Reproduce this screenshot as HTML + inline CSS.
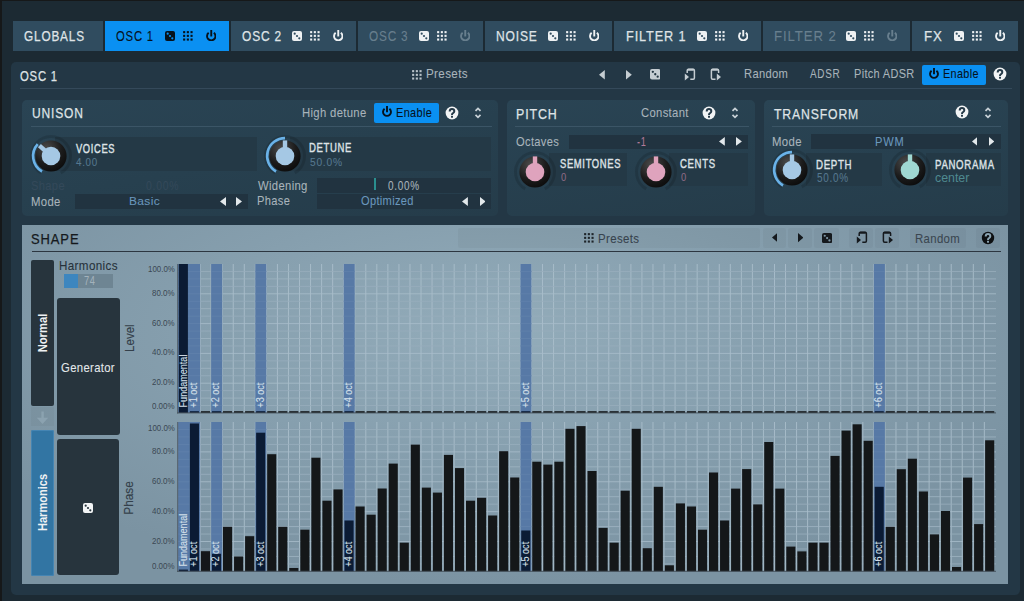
<!DOCTYPE html><html><head><meta charset="utf-8"><style>
html,body{margin:0;padding:0;}
body{width:1024px;height:601px;overflow:hidden;position:relative;background:#1c2a33;font-family:"Liberation Sans",sans-serif;}
.t{position:absolute;white-space:nowrap;transform-origin:0 0;}
.r{position:absolute;}
</style></head><body>
<div class="r" style="left:0px;top:0px;width:1024px;height:1px;background:#161819;border-radius:0px;"></div>
<div class="r" style="left:0px;top:0px;width:2px;height:601px;background:#161819;border-radius:0px;"></div>
<div class="r" style="left:13px;top:21px;width:90px;height:30px;background:#304c5f;border-radius:0px;"></div>
<div class="t" style="left:24.01px;top:29.35px;font-size:14.35px;line-height:14.35px;letter-spacing:1.00px;-webkit-text-stroke:0.25px #dfe3e6;color:#dfe3e6;transform:scaleX(0.823);">GLOBALS</div>
<div class="r" style="left:105px;top:21px;width:124px;height:30px;background:#0a90f2;border-radius:0px;"></div>
<div class="t" style="left:116.43px;top:29.35px;font-size:14.35px;line-height:14.35px;letter-spacing:1.00px;-webkit-text-stroke:0.08px #06121c;color:#06121c;transform:scaleX(0.789);">OSC 1</div>
<svg class="r" style="left:165px;top:31px;" width="10" height="10" viewBox="0 0 10 10"><rect x="0" y="0" width="10" height="10" rx="2" fill="#06121c"/><circle cx="2.7" cy="2.7" r="1.1" fill="#0a90f2"/><circle cx="5.0" cy="5.0" r="1.1" fill="#0a90f2"/><circle cx="7.3" cy="7.3" r="1.1" fill="#0a90f2"/></svg>
<svg class="r" style="left:182.5px;top:31px;" width="10" height="10" viewBox="0 0 10 10"><rect x="0.1" y="0.1" width="2.1" height="2.1" fill="#06121c"/><rect x="0.1" y="3.8000000000000003" width="2.1" height="2.1" fill="#06121c"/><rect x="0.1" y="7.5" width="2.1" height="2.1" fill="#06121c"/><rect x="3.8000000000000003" y="0.1" width="2.1" height="2.1" fill="#06121c"/><rect x="3.8000000000000003" y="3.8000000000000003" width="2.1" height="2.1" fill="#06121c"/><rect x="3.8000000000000003" y="7.5" width="2.1" height="2.1" fill="#06121c"/><rect x="7.5" y="0.1" width="2.1" height="2.1" fill="#06121c"/><rect x="7.5" y="3.8000000000000003" width="2.1" height="2.1" fill="#06121c"/><rect x="7.5" y="7.5" width="2.1" height="2.1" fill="#06121c"/></svg>
<svg class="r" style="left:205.5px;top:29.5px;" width="10.5" height="11.5" viewBox="0 0 10.5 11.5"><g transform="translate(0,0.5)"><path d="M2.66 2.34 A4.20 4.20 0 1 0 7.84 2.34" fill="none" stroke="#06121c" stroke-width="1.9"/><line x1="5.25" y1="-0.5" x2="5.25" y2="5.95" stroke="#06121c" stroke-width="1.9"/></g></svg>
<div class="r" style="left:231px;top:21px;width:125px;height:30px;background:#304c5f;border-radius:0px;"></div>
<div class="t" style="left:242.10px;top:29.35px;font-size:14.35px;line-height:14.35px;letter-spacing:1.00px;-webkit-text-stroke:0.25px #dfe3e6;color:#dfe3e6;transform:scaleX(0.833);">OSC 2</div>
<svg class="r" style="left:292px;top:31px;" width="10" height="10" viewBox="0 0 10 10"><rect x="0" y="0" width="10" height="10" rx="2" fill="#eef1f3"/><circle cx="2.7" cy="2.7" r="1.1" fill="#304c5f"/><circle cx="5.0" cy="5.0" r="1.1" fill="#304c5f"/><circle cx="7.3" cy="7.3" r="1.1" fill="#304c5f"/></svg>
<svg class="r" style="left:309.5px;top:31px;" width="10" height="10" viewBox="0 0 10 10"><rect x="0.1" y="0.1" width="2.1" height="2.1" fill="#eef1f3"/><rect x="0.1" y="3.8000000000000003" width="2.1" height="2.1" fill="#eef1f3"/><rect x="0.1" y="7.5" width="2.1" height="2.1" fill="#eef1f3"/><rect x="3.8000000000000003" y="0.1" width="2.1" height="2.1" fill="#eef1f3"/><rect x="3.8000000000000003" y="3.8000000000000003" width="2.1" height="2.1" fill="#eef1f3"/><rect x="3.8000000000000003" y="7.5" width="2.1" height="2.1" fill="#eef1f3"/><rect x="7.5" y="0.1" width="2.1" height="2.1" fill="#eef1f3"/><rect x="7.5" y="3.8000000000000003" width="2.1" height="2.1" fill="#eef1f3"/><rect x="7.5" y="7.5" width="2.1" height="2.1" fill="#eef1f3"/></svg>
<svg class="r" style="left:332.5px;top:29.5px;" width="10.5" height="11.5" viewBox="0 0 10.5 11.5"><g transform="translate(0,0.5)"><path d="M2.66 2.34 A4.20 4.20 0 1 0 7.84 2.34" fill="none" stroke="#eef1f3" stroke-width="1.9"/><line x1="5.25" y1="-0.5" x2="5.25" y2="5.95" stroke="#eef1f3" stroke-width="1.9"/></g></svg>
<div class="r" style="left:358px;top:21px;width:125px;height:30px;background:#304c5f;border-radius:0px;"></div>
<div class="t" style="left:369.21px;top:29.35px;font-size:14.35px;line-height:14.35px;letter-spacing:1.00px;-webkit-text-stroke:0.08px #687f8e;color:#687f8e;transform:scaleX(0.822);">OSC 3</div>
<svg class="r" style="left:419px;top:31px;" width="10" height="10" viewBox="0 0 10 10"><rect x="0" y="0" width="10" height="10" rx="2" fill="#eef1f3"/><circle cx="2.7" cy="2.7" r="1.1" fill="#304c5f"/><circle cx="5.0" cy="5.0" r="1.1" fill="#304c5f"/><circle cx="7.3" cy="7.3" r="1.1" fill="#304c5f"/></svg>
<svg class="r" style="left:436.5px;top:31px;" width="10" height="10" viewBox="0 0 10 10"><rect x="0.1" y="0.1" width="2.1" height="2.1" fill="#eef1f3"/><rect x="0.1" y="3.8000000000000003" width="2.1" height="2.1" fill="#eef1f3"/><rect x="0.1" y="7.5" width="2.1" height="2.1" fill="#eef1f3"/><rect x="3.8000000000000003" y="0.1" width="2.1" height="2.1" fill="#eef1f3"/><rect x="3.8000000000000003" y="3.8000000000000003" width="2.1" height="2.1" fill="#eef1f3"/><rect x="3.8000000000000003" y="7.5" width="2.1" height="2.1" fill="#eef1f3"/><rect x="7.5" y="0.1" width="2.1" height="2.1" fill="#eef1f3"/><rect x="7.5" y="3.8000000000000003" width="2.1" height="2.1" fill="#eef1f3"/><rect x="7.5" y="7.5" width="2.1" height="2.1" fill="#eef1f3"/></svg>
<svg class="r" style="left:459.5px;top:29.5px;" width="10.5" height="11.5" viewBox="0 0 10.5 11.5"><g transform="translate(0,0.5)"><path d="M2.66 2.34 A4.20 4.20 0 1 0 7.84 2.34" fill="none" stroke="#687f8e" stroke-width="1.9"/><line x1="5.25" y1="-0.5" x2="5.25" y2="5.95" stroke="#687f8e" stroke-width="1.9"/></g></svg>
<div class="r" style="left:485px;top:21px;width:127px;height:30px;background:#304c5f;border-radius:0px;"></div>
<div class="t" style="left:496.24px;top:29.35px;font-size:14.35px;line-height:14.35px;letter-spacing:1.00px;-webkit-text-stroke:0.25px #dfe3e6;color:#dfe3e6;transform:scaleX(0.840);">NOISE</div>
<svg class="r" style="left:548px;top:31px;" width="10" height="10" viewBox="0 0 10 10"><rect x="0" y="0" width="10" height="10" rx="2" fill="#eef1f3"/><circle cx="2.7" cy="2.7" r="1.1" fill="#304c5f"/><circle cx="5.0" cy="5.0" r="1.1" fill="#304c5f"/><circle cx="7.3" cy="7.3" r="1.1" fill="#304c5f"/></svg>
<svg class="r" style="left:565.5px;top:31px;" width="10" height="10" viewBox="0 0 10 10"><rect x="0.1" y="0.1" width="2.1" height="2.1" fill="#eef1f3"/><rect x="0.1" y="3.8000000000000003" width="2.1" height="2.1" fill="#eef1f3"/><rect x="0.1" y="7.5" width="2.1" height="2.1" fill="#eef1f3"/><rect x="3.8000000000000003" y="0.1" width="2.1" height="2.1" fill="#eef1f3"/><rect x="3.8000000000000003" y="3.8000000000000003" width="2.1" height="2.1" fill="#eef1f3"/><rect x="3.8000000000000003" y="7.5" width="2.1" height="2.1" fill="#eef1f3"/><rect x="7.5" y="0.1" width="2.1" height="2.1" fill="#eef1f3"/><rect x="7.5" y="3.8000000000000003" width="2.1" height="2.1" fill="#eef1f3"/><rect x="7.5" y="7.5" width="2.1" height="2.1" fill="#eef1f3"/></svg>
<svg class="r" style="left:588.5px;top:29.5px;" width="10.5" height="11.5" viewBox="0 0 10.5 11.5"><g transform="translate(0,0.5)"><path d="M2.66 2.34 A4.20 4.20 0 1 0 7.84 2.34" fill="none" stroke="#eef1f3" stroke-width="1.9"/><line x1="5.25" y1="-0.5" x2="5.25" y2="5.95" stroke="#eef1f3" stroke-width="1.9"/></g></svg>
<div class="r" style="left:614px;top:21px;width:147px;height:30px;background:#304c5f;border-radius:0px;"></div>
<div class="t" style="left:626.08px;top:29.35px;font-size:14.35px;line-height:14.35px;letter-spacing:1.00px;-webkit-text-stroke:0.25px #dfe3e6;color:#dfe3e6;transform:scaleX(0.885);">FILTER 1</div>
<svg class="r" style="left:697px;top:31px;" width="10" height="10" viewBox="0 0 10 10"><rect x="0" y="0" width="10" height="10" rx="2" fill="#eef1f3"/><circle cx="2.7" cy="2.7" r="1.1" fill="#304c5f"/><circle cx="5.0" cy="5.0" r="1.1" fill="#304c5f"/><circle cx="7.3" cy="7.3" r="1.1" fill="#304c5f"/></svg>
<svg class="r" style="left:714.5px;top:31px;" width="10" height="10" viewBox="0 0 10 10"><rect x="0.1" y="0.1" width="2.1" height="2.1" fill="#eef1f3"/><rect x="0.1" y="3.8000000000000003" width="2.1" height="2.1" fill="#eef1f3"/><rect x="0.1" y="7.5" width="2.1" height="2.1" fill="#eef1f3"/><rect x="3.8000000000000003" y="0.1" width="2.1" height="2.1" fill="#eef1f3"/><rect x="3.8000000000000003" y="3.8000000000000003" width="2.1" height="2.1" fill="#eef1f3"/><rect x="3.8000000000000003" y="7.5" width="2.1" height="2.1" fill="#eef1f3"/><rect x="7.5" y="0.1" width="2.1" height="2.1" fill="#eef1f3"/><rect x="7.5" y="3.8000000000000003" width="2.1" height="2.1" fill="#eef1f3"/><rect x="7.5" y="7.5" width="2.1" height="2.1" fill="#eef1f3"/></svg>
<svg class="r" style="left:737.5px;top:29.5px;" width="10.5" height="11.5" viewBox="0 0 10.5 11.5"><g transform="translate(0,0.5)"><path d="M2.66 2.34 A4.20 4.20 0 1 0 7.84 2.34" fill="none" stroke="#eef1f3" stroke-width="1.9"/><line x1="5.25" y1="-0.5" x2="5.25" y2="5.95" stroke="#eef1f3" stroke-width="1.9"/></g></svg>
<div class="r" style="left:763px;top:21px;width:147px;height:30px;background:#304c5f;border-radius:0px;"></div>
<div class="t" style="left:774.35px;top:29.35px;font-size:14.35px;line-height:14.35px;letter-spacing:1.00px;-webkit-text-stroke:0.08px #687f8e;color:#687f8e;transform:scaleX(0.918);">FILTER 2</div>
<svg class="r" style="left:846px;top:31px;" width="10" height="10" viewBox="0 0 10 10"><rect x="0" y="0" width="10" height="10" rx="2" fill="#eef1f3"/><circle cx="2.7" cy="2.7" r="1.1" fill="#304c5f"/><circle cx="5.0" cy="5.0" r="1.1" fill="#304c5f"/><circle cx="7.3" cy="7.3" r="1.1" fill="#304c5f"/></svg>
<svg class="r" style="left:863.5px;top:31px;" width="10" height="10" viewBox="0 0 10 10"><rect x="0.1" y="0.1" width="2.1" height="2.1" fill="#eef1f3"/><rect x="0.1" y="3.8000000000000003" width="2.1" height="2.1" fill="#eef1f3"/><rect x="0.1" y="7.5" width="2.1" height="2.1" fill="#eef1f3"/><rect x="3.8000000000000003" y="0.1" width="2.1" height="2.1" fill="#eef1f3"/><rect x="3.8000000000000003" y="3.8000000000000003" width="2.1" height="2.1" fill="#eef1f3"/><rect x="3.8000000000000003" y="7.5" width="2.1" height="2.1" fill="#eef1f3"/><rect x="7.5" y="0.1" width="2.1" height="2.1" fill="#eef1f3"/><rect x="7.5" y="3.8000000000000003" width="2.1" height="2.1" fill="#eef1f3"/><rect x="7.5" y="7.5" width="2.1" height="2.1" fill="#eef1f3"/></svg>
<svg class="r" style="left:886.5px;top:29.5px;" width="10.5" height="11.5" viewBox="0 0 10.5 11.5"><g transform="translate(0,0.5)"><path d="M2.66 2.34 A4.20 4.20 0 1 0 7.84 2.34" fill="none" stroke="#687f8e" stroke-width="1.9"/><line x1="5.25" y1="-0.5" x2="5.25" y2="5.95" stroke="#687f8e" stroke-width="1.9"/></g></svg>
<div class="r" style="left:912px;top:21px;width:106px;height:30px;background:#304c5f;border-radius:0px;"></div>
<div class="t" style="left:923.94px;top:29.35px;font-size:14.35px;line-height:14.35px;letter-spacing:1.00px;-webkit-text-stroke:0.25px #dfe3e6;color:#dfe3e6;transform:scaleX(0.922);">FX</div>
<svg class="r" style="left:954px;top:31px;" width="10" height="10" viewBox="0 0 10 10"><rect x="0" y="0" width="10" height="10" rx="2" fill="#eef1f3"/><circle cx="2.7" cy="2.7" r="1.1" fill="#304c5f"/><circle cx="5.0" cy="5.0" r="1.1" fill="#304c5f"/><circle cx="7.3" cy="7.3" r="1.1" fill="#304c5f"/></svg>
<svg class="r" style="left:971.5px;top:31px;" width="10" height="10" viewBox="0 0 10 10"><rect x="0.1" y="0.1" width="2.1" height="2.1" fill="#eef1f3"/><rect x="0.1" y="3.8000000000000003" width="2.1" height="2.1" fill="#eef1f3"/><rect x="0.1" y="7.5" width="2.1" height="2.1" fill="#eef1f3"/><rect x="3.8000000000000003" y="0.1" width="2.1" height="2.1" fill="#eef1f3"/><rect x="3.8000000000000003" y="3.8000000000000003" width="2.1" height="2.1" fill="#eef1f3"/><rect x="3.8000000000000003" y="7.5" width="2.1" height="2.1" fill="#eef1f3"/><rect x="7.5" y="0.1" width="2.1" height="2.1" fill="#eef1f3"/><rect x="7.5" y="3.8000000000000003" width="2.1" height="2.1" fill="#eef1f3"/><rect x="7.5" y="7.5" width="2.1" height="2.1" fill="#eef1f3"/></svg>
<svg class="r" style="left:994.5px;top:29.5px;" width="10.5" height="11.5" viewBox="0 0 10.5 11.5"><g transform="translate(0,0.5)"><path d="M2.66 2.34 A4.20 4.20 0 1 0 7.84 2.34" fill="none" stroke="#eef1f3" stroke-width="1.9"/><line x1="5.25" y1="-0.5" x2="5.25" y2="5.95" stroke="#eef1f3" stroke-width="1.9"/></g></svg>
<div class="r" style="left:11px;top:62px;width:1009px;height:533px;background:#233745;border-radius:5px;"></div>
<div class="t" style="left:20.43px;top:68.13px;font-size:15.07px;line-height:15.07px;letter-spacing:1.06px;-webkit-text-stroke:0.25px #dfe3e6;color:#dfe3e6;transform:scaleX(0.751);">OSC 1</div>
<div class="r" style="left:20px;top:88px;width:992px;height:1px;background:#34495a;border-radius:0px;"></div>
<svg class="r" style="left:412px;top:69.8px;" width="10" height="10" viewBox="0 0 10 10"><rect x="0.1" y="0.1" width="2.1" height="2.1" fill="#b8c2c8"/><rect x="0.1" y="3.8000000000000003" width="2.1" height="2.1" fill="#b8c2c8"/><rect x="0.1" y="7.5" width="2.1" height="2.1" fill="#b8c2c8"/><rect x="3.8000000000000003" y="0.1" width="2.1" height="2.1" fill="#b8c2c8"/><rect x="3.8000000000000003" y="3.8000000000000003" width="2.1" height="2.1" fill="#b8c2c8"/><rect x="3.8000000000000003" y="7.5" width="2.1" height="2.1" fill="#b8c2c8"/><rect x="7.5" y="0.1" width="2.1" height="2.1" fill="#b8c2c8"/><rect x="7.5" y="3.8000000000000003" width="2.1" height="2.1" fill="#b8c2c8"/><rect x="7.5" y="7.5" width="2.1" height="2.1" fill="#b8c2c8"/></svg>
<div class="t" style="left:426.07px;top:68.34px;font-size:12.46px;line-height:12.46px;letter-spacing:0.37px;-webkit-text-stroke:0.08px #a9b4bb;color:#a9b4bb;transform:scaleX(0.935);">Presets</div>
<svg class="r" style="left:599.4000000000001px;top:70.0px;" width="5.7999999999999545" height="9.5" viewBox="0 0 5.7999999999999545 9.5"><path d="M5.7999999999999545 0 L0 4.75 L5.7999999999999545 9.5 Z" fill="#c5cdd2"/></svg>
<svg class="r" style="left:625.9px;top:70.0px;" width="5.7999999999999545" height="9.5" viewBox="0 0 5.7999999999999545 9.5"><path d="M0 0 L5.7999999999999545 4.75 L0 9.5 Z" fill="#c5cdd2"/></svg>
<svg class="r" style="left:649.5px;top:69.2px;" width="10.5" height="10.5" viewBox="0 0 10.5 10.5"><rect x="0" y="0" width="10.5" height="10.5" rx="2" fill="#c5cdd2"/><circle cx="2.835" cy="2.835" r="1.155" fill="#223541"/><circle cx="5.25" cy="5.25" r="1.155" fill="#223541"/><circle cx="7.665" cy="7.665" r="1.155" fill="#223541"/></svg>
<svg class="r" style="left:684px;top:68px;" width="12" height="13" viewBox="0 0 12 13"><path d="M3.2 5 V2.6 Q3.2 1.3 4.5 1.3 H9.2 Q10.4 1.3 10.4 2.6 V10.1 Q10.4 11.3 9.2 11.3 H6.3" fill="none" stroke="#c5cdd2" stroke-width="1.5"/><rect x="3.6" y="0.8" width="6.4" height="2" rx="0.8" fill="#c5cdd2"/><path d="M0.8 5.6 L5 9 L0.8 12.4 Z" fill="#c5cdd2"/></svg>
<svg class="r" style="left:710px;top:68px;" width="12" height="13" viewBox="0 0 12 13"><path d="M8.6 5 V2.6 Q8.6 1.3 7.3 1.3 H2.6 Q1.4 1.3 1.4 2.6 V10.1 Q1.4 11.3 2.6 11.3 H5.5" fill="none" stroke="#c5cdd2" stroke-width="1.5"/><rect x="1.8" y="0.8" width="6.4" height="2" rx="0.8" fill="#c5cdd2"/><path d="M6.8 5.6 L11 9 L6.8 12.4 Z" fill="#c5cdd2"/></svg>
<div class="t" style="left:743.71px;top:68.34px;font-size:12.46px;line-height:12.46px;letter-spacing:0.37px;-webkit-text-stroke:0.08px #a9b4bb;color:#a9b4bb;transform:scaleX(0.898);">Random</div>
<div class="t" style="left:810.20px;top:68.34px;font-size:12.46px;line-height:12.46px;letter-spacing:0.87px;-webkit-text-stroke:0.08px #a9b4bb;color:#a9b4bb;transform:scaleX(0.800);">ADSR</div>
<div class="t" style="left:853.62px;top:68.34px;font-size:12.46px;line-height:12.46px;letter-spacing:0.37px;-webkit-text-stroke:0.08px #a9b4bb;color:#a9b4bb;transform:scaleX(0.880);">Pitch ADSR</div>
<div class="r" style="left:921.5px;top:64.6px;width:64.20000000000005px;height:20.0px;background:#0a90f2;border-radius:2px;"></div>
<svg class="r" style="left:929px;top:68.0px;" width="10" height="11" viewBox="0 0 10 11"><g transform="translate(0,0.5)"><path d="M2.57 2.29 A3.95 3.95 0 1 0 7.43 2.29" fill="none" stroke="#06121c" stroke-width="1.9"/><line x1="5.0" y1="-0.5" x2="5.0" y2="5.7" stroke="#06121c" stroke-width="1.9"/></g></svg>
<div class="t" style="left:943.33px;top:68.34px;font-size:12.46px;line-height:12.46px;letter-spacing:0.37px;-webkit-text-stroke:0.08px #06121c;color:#06121c;transform:scaleX(0.874);">Enable</div>
<svg class="r" style="left:992.5px;top:67.3px;" width="14" height="14" viewBox="0 0 14 14"><circle cx="7" cy="7" r="6.4" fill="#f2f4f5"/><path d="M4.7 5.5 Q4.7 3.1 7 3.1 Q9.3 3.1 9.3 5.2 Q9.3 6.4 8 7.1 Q7 7.6 7 8.9" fill="none" stroke="#253a48" stroke-width="2"/><rect x="6" y="9.8" width="2" height="1.9" fill="#253a48"/></svg>
<div class="r" style="left:22px;top:100px;width:476px;height:116px;background:linear-gradient(170deg,#2a4454 0%,#27404f 50%,#253c4a 100%);border-radius:5px;"></div>
<div class="r" style="left:507px;top:100px;width:248px;height:116px;background:linear-gradient(170deg,#2a4454 0%,#27404f 50%,#253c4a 100%);border-radius:5px;"></div>
<div class="r" style="left:764px;top:100px;width:244px;height:116px;background:linear-gradient(170deg,#2a4454 0%,#27404f 50%,#253c4a 100%);border-radius:5px;"></div>
<div class="t" style="left:31.84px;top:106.48px;font-size:14.78px;line-height:14.78px;letter-spacing:1.03px;-webkit-text-stroke:0.25px #dfe3e6;color:#dfe3e6;transform:scaleX(0.814);">UNISON</div>
<div class="t" style="left:302.40px;top:106.84px;font-size:12.46px;line-height:12.46px;letter-spacing:0.37px;-webkit-text-stroke:0.08px #a9b4bb;color:#a9b4bb;transform:scaleX(0.907);">High detune</div>
<div class="r" style="left:374px;top:103px;width:65px;height:20px;background:#0a90f2;border-radius:2px;"></div>
<svg class="r" style="left:382.3px;top:106.3px;" width="10" height="11" viewBox="0 0 10 11"><g transform="translate(0,0.5)"><path d="M2.57 2.29 A3.95 3.95 0 1 0 7.43 2.29" fill="none" stroke="#06121c" stroke-width="1.9"/><line x1="5.0" y1="-0.5" x2="5.0" y2="5.7" stroke="#06121c" stroke-width="1.9"/></g></svg>
<div class="t" style="left:396.12px;top:106.84px;font-size:12.46px;line-height:12.46px;letter-spacing:0.37px;-webkit-text-stroke:0.08px #06121c;color:#06121c;transform:scaleX(0.882);">Enable</div>
<svg class="r" style="left:445px;top:105.8px;" width="14" height="14" viewBox="0 0 14 14"><circle cx="7" cy="7" r="6.4" fill="#f2f4f5"/><path d="M4.7 5.5 Q4.7 3.1 7 3.1 Q9.3 3.1 9.3 5.2 Q9.3 6.4 8 7.1 Q7 7.6 7 8.9" fill="none" stroke="#253a48" stroke-width="2"/><rect x="6" y="9.8" width="2" height="1.9" fill="#253a48"/></svg>
<svg class="r" style="left:474.3px;top:106.6px;" width="8" height="12" viewBox="0 0 8 12"><path d="M1.5 3.9 L4 1.4 L6.5 3.9" fill="none" stroke="#c9d2d8" stroke-width="1.7"/><path d="M1.5 7.9 L4 10.4 L6.5 7.9" fill="none" stroke="#c9d2d8" stroke-width="1.7"/></svg>
<div class="r" style="left:31px;top:126px;width:461px;height:1px;background:#3b5566;border-radius:0px;"></div>
<div class="r" style="left:55px;top:137px;width:202px;height:34px;background:#243946;border-radius:0px;"></div>
<div class="r" style="left:290px;top:137px;width:201px;height:34px;background:#243946;border-radius:0px;"></div>
<svg class="r" style="left:26.5px;top:131.8px;" width="48" height="48" viewBox="0 0 48 48"><path d="M14.25 40.89 A19.5 19.5 0 1 1 33.75 40.89" fill="none" stroke="rgba(0,0,0,0.13)" stroke-width="3"/><path d="M15.05 39.50 A17.9 17.9 0 0 1 10.70 12.02" fill="none" stroke="#6ab2e8" stroke-width="2.6"/><defs><radialGradient id="g50155" cx="35%" cy="25%" r="80%"><stop offset="0" stop-color="#4a4a4a"/><stop offset="0.6" stop-color="#1c1c1c"/><stop offset="1" stop-color="#0c0c0c"/></radialGradient></defs><circle cx="24.0" cy="24.0" r="15.6" fill="url(#g50155)"/><line x1="24.0" y1="24.0" x2="12.41" y2="13.56" stroke="#a5c8e4" stroke-width="4.4"/><circle cx="24.0" cy="24.0" r="9.3" fill="#a5c8e4"/></svg>
<div class="t" style="left:75.91px;top:142.59px;font-size:12.17px;line-height:12.17px;letter-spacing:0.85px;-webkit-text-stroke:0.4px #dfe3e6;color:#dfe3e6;transform:scaleX(0.767);">VOICES</div>
<div class="t" style="left:75.80px;top:157.42px;font-size:10.72px;line-height:10.72px;letter-spacing:0.75px;-webkit-text-stroke:0.08px #56788f;color:#56788f;transform:scaleX(0.915);">4.00</div>
<div class="t" style="left:31.44px;top:179.94px;font-size:12.46px;line-height:12.46px;letter-spacing:0.37px;-webkit-text-stroke:0.08px #34495a;color:#34495a;transform:scaleX(0.896);">Shape</div>
<div class="t" style="left:145.58px;top:179.94px;font-size:12.46px;line-height:12.46px;letter-spacing:0.87px;-webkit-text-stroke:0.08px #34495a;color:#34495a;transform:scaleX(0.837);">0.00%</div>
<div class="t" style="left:31.09px;top:195.54px;font-size:12.46px;line-height:12.46px;letter-spacing:0.37px;-webkit-text-stroke:0.08px #a9b4bb;color:#a9b4bb;transform:scaleX(0.910);">Mode</div>
<div class="r" style="left:75px;top:194px;width:173px;height:15px;background:#213340;border-radius:0px;"></div>
<div class="t" style="left:129.04px;top:196.08px;font-size:11.59px;line-height:11.59px;letter-spacing:0.35px;-webkit-text-stroke:0.08px #6a97bd;color:#6a97bd;transform:scaleX(1.031);">Basic</div>
<svg class="r" style="left:219.7px;top:197.0px;" width="6.100000000000023" height="9.0" viewBox="0 0 6.100000000000023 9.0"><path d="M6.100000000000023 0 L0 4.5 L6.100000000000023 9.0 Z" fill="#e3e8eb"/></svg>
<svg class="r" style="left:236.3px;top:197.0px;" width="6.0" height="9.0" viewBox="0 0 6.0 9.0"><path d="M0 0 L6.0 4.5 L0 9.0 Z" fill="#e3e8eb"/></svg>
<svg class="r" style="left:261.0px;top:132.0px;" width="48" height="48" viewBox="0 0 48 48"><path d="M14.25 40.89 A19.5 19.5 0 1 1 33.75 40.89" fill="none" stroke="rgba(0,0,0,0.13)" stroke-width="3"/><path d="M15.05 39.50 A17.9 17.9 0 0 1 24.00 6.10" fill="none" stroke="#6ab2e8" stroke-width="2.6"/><defs><radialGradient id="g285156" cx="35%" cy="25%" r="80%"><stop offset="0" stop-color="#4a4a4a"/><stop offset="0.6" stop-color="#1c1c1c"/><stop offset="1" stop-color="#0c0c0c"/></radialGradient></defs><circle cx="24.0" cy="24.0" r="15.6" fill="url(#g285156)"/><line x1="24.0" y1="24.0" x2="24.00" y2="8.40" stroke="#a5c8e4" stroke-width="4.4"/><circle cx="24.0" cy="24.0" r="9.3" fill="#a5c8e4"/></svg>
<div class="t" style="left:309.24px;top:142.32px;font-size:12.61px;line-height:12.61px;letter-spacing:0.88px;-webkit-text-stroke:0.4px #dfe3e6;color:#dfe3e6;transform:scaleX(0.755);">DETUNE</div>
<div class="t" style="left:309.59px;top:156.68px;font-size:11.59px;line-height:11.59px;letter-spacing:0.81px;-webkit-text-stroke:0.08px #56788f;color:#56788f;transform:scaleX(0.888);">50.0%</div>
<div class="t" style="left:258.00px;top:179.45px;font-size:13.04px;line-height:13.04px;letter-spacing:0.39px;-webkit-text-stroke:0.08px #a9b4bb;color:#a9b4bb;transform:scaleX(0.865);">Widening</div>
<div class="r" style="left:317px;top:178px;width:174px;height:15px;background:#213340;border-radius:0px;"></div>
<div class="r" style="left:374px;top:178px;width:2px;height:12px;background:#2a8f8f;border-radius:0px;"></div>
<div class="t" style="left:388.30px;top:179.45px;font-size:13.04px;line-height:13.04px;letter-spacing:0.91px;-webkit-text-stroke:0.08px #a9b4bb;color:#a9b4bb;transform:scaleX(0.764);">0.00%</div>
<div class="t" style="left:257.11px;top:195.47px;font-size:12.32px;line-height:12.32px;letter-spacing:0.37px;-webkit-text-stroke:0.08px #a9b4bb;color:#a9b4bb;transform:scaleX(0.904);">Phase</div>
<div class="r" style="left:317px;top:194px;width:174px;height:15px;background:#213340;border-radius:0px;"></div>
<div class="t" style="left:361.25px;top:195.47px;font-size:12.32px;line-height:12.32px;letter-spacing:0.37px;-webkit-text-stroke:0.08px #6a97bd;color:#6a97bd;transform:scaleX(0.898);">Optimized</div>
<svg class="r" style="left:462.09999999999997px;top:197.0px;" width="5.900000000000034" height="9.0" viewBox="0 0 5.900000000000034 9.0"><path d="M5.900000000000034 0 L0 4.5 L5.900000000000034 9.0 Z" fill="#e3e8eb"/></svg>
<svg class="r" style="left:479.5px;top:197.0px;" width="5.699999999999989" height="9.0" viewBox="0 0 5.699999999999989 9.0"><path d="M0 0 L5.699999999999989 4.5 L0 9.0 Z" fill="#e3e8eb"/></svg>
<div class="t" style="left:516.31px;top:106.43px;font-size:15.07px;line-height:15.07px;letter-spacing:1.06px;-webkit-text-stroke:0.25px #dfe3e6;color:#dfe3e6;transform:scaleX(0.825);">PITCH</div>
<div class="t" style="left:641.14px;top:106.70px;font-size:12.75px;line-height:12.75px;letter-spacing:0.38px;-webkit-text-stroke:0.08px #a9b4bb;color:#a9b4bb;transform:scaleX(0.882);">Constant</div>
<svg class="r" style="left:702px;top:105.6px;" width="14" height="14" viewBox="0 0 14 14"><circle cx="7" cy="7" r="6.4" fill="#f2f4f5"/><path d="M4.7 5.5 Q4.7 3.1 7 3.1 Q9.3 3.1 9.3 5.2 Q9.3 6.4 8 7.1 Q7 7.6 7 8.9" fill="none" stroke="#253a48" stroke-width="2"/><rect x="6" y="9.8" width="2" height="1.9" fill="#253a48"/></svg>
<svg class="r" style="left:731.1px;top:106.6px;" width="8" height="12" viewBox="0 0 8 12"><path d="M1.5 3.9 L4 1.4 L6.5 3.9" fill="none" stroke="#c9d2d8" stroke-width="1.7"/><path d="M1.5 7.9 L4 10.4 L6.5 7.9" fill="none" stroke="#c9d2d8" stroke-width="1.7"/></svg>
<div class="r" style="left:515px;top:126px;width:234px;height:1px;background:#3b5566;border-radius:0px;"></div>
<div class="t" style="left:515.94px;top:135.50px;font-size:12.75px;line-height:12.75px;letter-spacing:0.38px;-webkit-text-stroke:0.08px #a9b4bb;color:#a9b4bb;transform:scaleX(0.874);">Octaves</div>
<div class="r" style="left:568.5px;top:134.5px;width:179.10000000000002px;height:14.0px;background:#213340;border-radius:0px;"></div>
<div class="t" style="left:637.13px;top:135.50px;font-size:12.75px;line-height:12.75px;letter-spacing:0.89px;-webkit-text-stroke:0.08px #b07a98;color:#b07a98;transform:scaleX(0.721);">-1</div>
<svg class="r" style="left:719.2px;top:137.20000000000002px;" width="5.7999999999999545" height="8.799999999999983" viewBox="0 0 5.7999999999999545 8.799999999999983"><path d="M5.7999999999999545 0 L0 4.3999999999999915 L5.7999999999999545 8.799999999999983 Z" fill="#e3e8eb"/></svg>
<svg class="r" style="left:736px;top:137.20000000000002px;" width="5.899999999999977" height="8.799999999999983" viewBox="0 0 5.899999999999977 8.799999999999983"><path d="M0 0 L5.899999999999977 4.3999999999999915 L0 8.799999999999983 Z" fill="#e3e8eb"/></svg>
<div class="r" style="left:549px;top:153px;width:78px;height:33px;background:#243946;border-radius:0px;"></div>
<div class="r" style="left:669px;top:153px;width:79px;height:33px;background:#243946;border-radius:0px;"></div>
<svg class="r" style="left:511.0px;top:147.6px;" width="48" height="48" viewBox="0 0 48 48"><path d="M14.25 40.89 A19.5 19.5 0 1 1 33.75 40.89" fill="none" stroke="rgba(0,0,0,0.13)" stroke-width="3"/><defs><radialGradient id="g535171" cx="35%" cy="25%" r="80%"><stop offset="0" stop-color="#4a4a4a"/><stop offset="0.6" stop-color="#1c1c1c"/><stop offset="1" stop-color="#0c0c0c"/></radialGradient></defs><circle cx="24.0" cy="24.0" r="15.6" fill="url(#g535171)"/><line x1="24.0" y1="24.0" x2="24.00" y2="8.40" stroke="#dfa3bd" stroke-width="4.4"/><circle cx="24.0" cy="24.0" r="9.3" fill="#dfa3bd"/></svg>
<div class="t" style="left:560.13px;top:158.21px;font-size:12.03px;line-height:12.03px;letter-spacing:0.84px;-webkit-text-stroke:0.4px #dfe3e6;color:#dfe3e6;transform:scaleX(0.783);">SEMITONES</div>
<div class="t" style="left:560.62px;top:172.40px;font-size:11.45px;line-height:11.45px;letter-spacing:0.80px;-webkit-text-stroke:0.08px #8f6a85;color:#8f6a85;transform:scaleX(0.819);">0</div>
<svg class="r" style="left:631.5px;top:147.7px;" width="48" height="48" viewBox="0 0 48 48"><path d="M14.25 40.89 A19.5 19.5 0 1 1 33.75 40.89" fill="none" stroke="rgba(0,0,0,0.13)" stroke-width="3"/><defs><radialGradient id="g655171" cx="35%" cy="25%" r="80%"><stop offset="0" stop-color="#4a4a4a"/><stop offset="0.6" stop-color="#1c1c1c"/><stop offset="1" stop-color="#0c0c0c"/></radialGradient></defs><circle cx="24.0" cy="24.0" r="15.6" fill="url(#g655171)"/><line x1="24.0" y1="24.0" x2="24.00" y2="8.40" stroke="#dfa3bd" stroke-width="4.4"/><circle cx="24.0" cy="24.0" r="9.3" fill="#dfa3bd"/></svg>
<div class="t" style="left:680.42px;top:158.21px;font-size:12.03px;line-height:12.03px;letter-spacing:0.84px;-webkit-text-stroke:0.4px #dfe3e6;color:#dfe3e6;transform:scaleX(0.796);">CENTS</div>
<div class="t" style="left:680.62px;top:172.40px;font-size:11.45px;line-height:11.45px;letter-spacing:0.80px;-webkit-text-stroke:0.08px #8f6a85;color:#8f6a85;transform:scaleX(0.819);">0</div>
<div class="t" style="left:773.56px;top:106.41px;font-size:15.22px;line-height:15.22px;letter-spacing:1.07px;-webkit-text-stroke:0.25px #dfe3e6;color:#dfe3e6;transform:scaleX(0.803);">TRANSFORM</div>
<svg class="r" style="left:955px;top:105.3px;" width="14" height="14" viewBox="0 0 14 14"><circle cx="7" cy="7" r="6.4" fill="#f2f4f5"/><path d="M4.7 5.5 Q4.7 3.1 7 3.1 Q9.3 3.1 9.3 5.2 Q9.3 6.4 8 7.1 Q7 7.6 7 8.9" fill="none" stroke="#253a48" stroke-width="2"/><rect x="6" y="9.8" width="2" height="1.9" fill="#253a48"/></svg>
<svg class="r" style="left:984.2px;top:106.6px;" width="8" height="12" viewBox="0 0 8 12"><path d="M1.5 3.9 L4 1.4 L6.5 3.9" fill="none" stroke="#c9d2d8" stroke-width="1.7"/><path d="M1.5 7.9 L4 10.4 L6.5 7.9" fill="none" stroke="#c9d2d8" stroke-width="1.7"/></svg>
<div class="r" style="left:772px;top:126px;width:229px;height:1px;background:#3b5566;border-radius:0px;"></div>
<div class="t" style="left:772.49px;top:135.74px;font-size:12.46px;line-height:12.46px;letter-spacing:0.37px;-webkit-text-stroke:0.08px #a9b4bb;color:#a9b4bb;transform:scaleX(0.913);">Mode</div>
<div class="r" style="left:811px;top:134.3px;width:189.5px;height:14.599999999999994px;background:#213340;border-radius:0px;"></div>
<div class="t" style="left:874.61px;top:135.74px;font-size:12.46px;line-height:12.46px;letter-spacing:0.87px;-webkit-text-stroke:0.08px #6a97bd;color:#6a97bd;transform:scaleX(0.889);">PWM</div>
<svg class="r" style="left:972.1px;top:137.20000000000002px;" width="5.399999999999977" height="8.799999999999983" viewBox="0 0 5.399999999999977 8.799999999999983"><path d="M5.399999999999977 0 L0 4.3999999999999915 L5.399999999999977 8.799999999999983 Z" fill="#e3e8eb"/></svg>
<svg class="r" style="left:989px;top:137.20000000000002px;" width="5.2999999999999545" height="8.799999999999983" viewBox="0 0 5.2999999999999545 8.799999999999983"><path d="M0 0 L5.2999999999999545 4.3999999999999915 L0 8.799999999999983 Z" fill="#e3e8eb"/></svg>
<div class="r" style="left:806px;top:153px;width:76px;height:33px;background:#243946;border-radius:0px;"></div>
<div class="r" style="left:926px;top:153px;width:74.5px;height:33px;background:#243946;border-radius:0px;"></div>
<svg class="r" style="left:767.7px;top:146.2px;" width="48" height="48" viewBox="0 0 48 48"><path d="M14.25 40.89 A19.5 19.5 0 1 1 33.75 40.89" fill="none" stroke="rgba(0,0,0,0.13)" stroke-width="3"/><path d="M15.05 39.50 A17.9 17.9 0 0 1 24.00 6.10" fill="none" stroke="#6ab2e8" stroke-width="2.6"/><defs><radialGradient id="g791170" cx="35%" cy="25%" r="80%"><stop offset="0" stop-color="#4a4a4a"/><stop offset="0.6" stop-color="#1c1c1c"/><stop offset="1" stop-color="#0c0c0c"/></radialGradient></defs><circle cx="24.0" cy="24.0" r="15.6" fill="url(#g791170)"/><line x1="24.0" y1="24.0" x2="24.00" y2="8.40" stroke="#a5c8e4" stroke-width="4.4"/><circle cx="24.0" cy="24.0" r="9.3" fill="#a5c8e4"/></svg>
<div class="t" style="left:816.12px;top:157.65px;font-size:13.04px;line-height:13.04px;letter-spacing:0.91px;-webkit-text-stroke:0.4px #dfe3e6;color:#dfe3e6;transform:scaleX(0.745);">DEPTH</div>
<div class="t" style="left:816.60px;top:172.34px;font-size:12.46px;line-height:12.46px;letter-spacing:0.87px;-webkit-text-stroke:0.08px #56788f;color:#56788f;transform:scaleX(0.802);">50.0%</div>
<svg class="r" style="left:885.7px;top:146.2px;" width="48" height="48" viewBox="0 0 48 48"><path d="M14.25 40.89 A19.5 19.5 0 1 1 33.75 40.89" fill="none" stroke="rgba(0,0,0,0.13)" stroke-width="3"/><defs><radialGradient id="g909170" cx="35%" cy="25%" r="80%"><stop offset="0" stop-color="#4a4a4a"/><stop offset="0.6" stop-color="#1c1c1c"/><stop offset="1" stop-color="#0c0c0c"/></radialGradient></defs><circle cx="24.0" cy="24.0" r="15.6" fill="url(#g909170)"/><line x1="24.0" y1="24.0" x2="24.00" y2="8.40" stroke="#9fd8d2" stroke-width="4.4"/><circle cx="24.0" cy="24.0" r="9.3" fill="#9fd8d2"/></svg>
<div class="t" style="left:934.53px;top:157.65px;font-size:13.04px;line-height:13.04px;letter-spacing:0.91px;-webkit-text-stroke:0.4px #dfe3e6;color:#dfe3e6;transform:scaleX(0.739);">PANORAMA</div>
<div class="t" style="left:935.01px;top:172.17px;font-size:12.08px;line-height:12.08px;color:#4f8a90;transform:scaleX(1.022);">center</div>
<div class="r" style="left:22px;top:225px;width:986px;height:359px;background:radial-gradient(ellipse 60% 70% at 48% 30%, #93acba 0%, #869fae 50%, #7b93a2 100%);border-radius:0px;"></div>
<div class="t" style="left:31.25px;top:231.99px;font-size:14.06px;line-height:14.06px;letter-spacing:0.98px;-webkit-text-stroke:0.25px #15191d;color:#15191d;transform:scaleX(0.922);">SHAPE</div>
<div class="r" style="left:32px;top:251px;width:969px;height:1px;background:#2c3640;border-radius:0px;"></div>
<svg class="r" style="left:584px;top:233.2px;" width="10" height="10" viewBox="0 0 10 10"><rect x="0.1" y="0.1" width="2.1" height="2.1" fill="#20262b"/><rect x="0.1" y="3.8000000000000003" width="2.1" height="2.1" fill="#20262b"/><rect x="0.1" y="7.5" width="2.1" height="2.1" fill="#20262b"/><rect x="3.8000000000000003" y="0.1" width="2.1" height="2.1" fill="#20262b"/><rect x="3.8000000000000003" y="3.8000000000000003" width="2.1" height="2.1" fill="#20262b"/><rect x="3.8000000000000003" y="7.5" width="2.1" height="2.1" fill="#20262b"/><rect x="7.5" y="0.1" width="2.1" height="2.1" fill="#20262b"/><rect x="7.5" y="3.8000000000000003" width="2.1" height="2.1" fill="#20262b"/><rect x="7.5" y="7.5" width="2.1" height="2.1" fill="#20262b"/></svg>
<div class="t" style="left:598.08px;top:231.85px;font-size:13.04px;line-height:13.04px;letter-spacing:0.39px;-webkit-text-stroke:0.08px #3a4650;color:#3a4650;transform:scaleX(0.882);">Presets</div>
<div class="r" style="left:458px;top:228px;width:302px;height:20px;background:rgba(0,0,0,0.035);border-radius:2px;"></div>
<div class="r" style="left:762.7px;top:228px;width:23.59999999999991px;height:20px;background:rgba(0,0,0,0.035);border-radius:2px;"></div>
<div class="r" style="left:788px;top:228px;width:24.200000000000045px;height:20px;background:rgba(0,0,0,0.035);border-radius:2px;"></div>
<div class="r" style="left:814px;top:228px;width:24.899999999999977px;height:20px;background:rgba(0,0,0,0.035);border-radius:2px;"></div>
<div class="r" style="left:849px;top:228px;width:24px;height:20px;background:rgba(0,0,0,0.035);border-radius:2px;"></div>
<div class="r" style="left:875px;top:228px;width:24.299999999999955px;height:20px;background:rgba(0,0,0,0.035);border-radius:2px;"></div>
<div class="r" style="left:909.5px;top:228px;width:56.299999999999955px;height:20px;background:rgba(0,0,0,0.035);border-radius:2px;"></div>
<div class="r" style="left:976px;top:228px;width:24px;height:20px;background:rgba(0,0,0,0.035);border-radius:2px;"></div>
<svg class="r" style="left:772.0px;top:233.4px;" width="5.399999999999977" height="9.199999999999989" viewBox="0 0 5.399999999999977 9.199999999999989"><path d="M5.399999999999977 0 L0 4.599999999999994 L5.399999999999977 9.199999999999989 Z" fill="#15191d"/></svg>
<svg class="r" style="left:797.7px;top:233.4px;" width="5.399999999999864" height="9.199999999999989" viewBox="0 0 5.399999999999864 9.199999999999989"><path d="M0 0 L5.399999999999864 4.599999999999994 L0 9.199999999999989 Z" fill="#15191d"/></svg>
<svg class="r" style="left:821.6px;top:232.8px;" width="10.2" height="10.2" viewBox="0 0 10.2 10.2"><rect x="0" y="0" width="10.2" height="10.2" rx="2" fill="#15191d"/><circle cx="2.754" cy="2.754" r="1.1219999999999999" fill="#7f98a7"/><circle cx="5.1" cy="5.1" r="1.1219999999999999" fill="#7f98a7"/><circle cx="7.446" cy="7.446" r="1.1219999999999999" fill="#7f98a7"/></svg>
<svg class="r" style="left:856px;top:230.8px;" width="12" height="13" viewBox="0 0 12 13"><path d="M3.2 5 V2.6 Q3.2 1.3 4.5 1.3 H9.2 Q10.4 1.3 10.4 2.6 V10.1 Q10.4 11.3 9.2 11.3 H6.3" fill="none" stroke="#15191d" stroke-width="1.5"/><rect x="3.6" y="0.8" width="6.4" height="2" rx="0.8" fill="#15191d"/><path d="M0.8 5.6 L5 9 L0.8 12.4 Z" fill="#15191d"/></svg>
<svg class="r" style="left:881.8px;top:230.8px;" width="12" height="13" viewBox="0 0 12 13"><path d="M8.6 5 V2.6 Q8.6 1.3 7.3 1.3 H2.6 Q1.4 1.3 1.4 2.6 V10.1 Q1.4 11.3 2.6 11.3 H5.5" fill="none" stroke="#15191d" stroke-width="1.5"/><rect x="1.8" y="0.8" width="6.4" height="2" rx="0.8" fill="#15191d"/><path d="M6.8 5.6 L11 9 L6.8 12.4 Z" fill="#15191d"/></svg>
<div class="t" style="left:915.39px;top:231.85px;font-size:13.04px;line-height:13.04px;letter-spacing:0.39px;-webkit-text-stroke:0.08px #3a4650;color:#3a4650;transform:scaleX(0.874);">Random</div>
<svg class="r" style="left:981.3px;top:231px;" width="14" height="14" viewBox="0 0 14 14"><circle cx="7" cy="7" r="6.2" fill="#0d0f11"/><path d="M4.7 5.5 Q4.7 3.1 7 3.1 Q9.3 3.1 9.3 5.2 Q9.3 6.4 8 7.1 Q7 7.6 7 8.9" fill="none" stroke="#8aa3b1" stroke-width="2"/><rect x="6" y="9.8" width="2" height="1.9" fill="#8aa3b1"/></svg>
<div class="r" style="left:31px;top:260px;width:23px;height:146px;background:#27343d;border-radius:2px;"></div>
<div class="t" style="left:0;top:0;transform:translate(35.79px,352.28px) rotate(-90deg) scaleX(0.860);font-size:13px;line-height:13px;color:#eef1f3;-webkit-text-stroke:0.0px #eef1f3;font-weight:bold;">Normal</div>
<div class="t" style="left:59.27px;top:259.99px;font-size:12.17px;line-height:12.17px;letter-spacing:0.37px;-webkit-text-stroke:0.08px #26313a;color:#26313a;transform:scaleX(0.959);">Harmonics</div>
<div class="r" style="left:63.6px;top:274px;width:49.1px;height:14px;background:#6e8593;border-radius:0px;"></div>
<div class="r" style="left:63.6px;top:274px;width:14.699999999999996px;height:14px;background:#3d86bf;border-radius:0px;"></div>
<div class="t" style="left:83.54px;top:274.77px;font-size:12.32px;line-height:12.32px;letter-spacing:0.86px;-webkit-text-stroke:0.08px #a3b2bc;color:#a3b2bc;transform:scaleX(0.753);">74</div>
<div class="r" style="left:57px;top:298px;width:62.599999999999994px;height:137.3px;background:#27343d;border-radius:3px;"></div>
<div class="t" style="left:61.43px;top:360.95px;font-size:13.04px;line-height:13.04px;letter-spacing:0.39px;-webkit-text-stroke:0.08px #e4e8eb;color:#e4e8eb;transform:scaleX(0.868);">Generator</div>
<div class="r" style="left:31px;top:407px;width:23px;height:19px;background:rgba(0,0,0,0.03);border-radius:0px;"></div>
<svg class="r" style="left:36px;top:411px;" width="13" height="14" viewBox="0 0 13 14"><rect x="5.4" y="0.5" width="2.4" height="7" fill="#8ba2b0"/><path d="M0.8 6.8 L12.2 6.8 L6.5 13 Z" fill="#8ba2b0"/></svg>
<div class="r" style="left:31px;top:429.5px;width:23px;height:146.0px;background:#3275a3;border-radius:2px;box-shadow:inset 0 0 0 1px #4585b3;"></div>
<div class="t" style="left:0;top:0;transform:translate(35.99px,531.07px) rotate(-90deg) scaleX(0.851);font-size:13px;line-height:13px;color:#eef1f3;-webkit-text-stroke:0.0px #eef1f3;font-weight:bold;">Harmonics</div>
<div class="r" style="left:56.8px;top:438.6px;width:62.60000000000001px;height:136.89999999999998px;background:#27343d;border-radius:3px;"></div>
<svg class="r" style="left:82.8px;top:502.5px;" width="10" height="10" viewBox="0 0 10 10"><rect x="0" y="0" width="10" height="10" rx="2" fill="#f2f4f5"/><circle cx="2.7" cy="2.7" r="1.1" fill="#27343d"/><circle cx="5.0" cy="5.0" r="1.1" fill="#27343d"/><circle cx="7.3" cy="7.3" r="1.1" fill="#27343d"/></svg>
<div class="t" style="left:0;top:0;transform:translate(123.58px,351.92px) rotate(-90deg) scaleX(0.939);font-size:12.3px;line-height:12.3px;color:#34404a;-webkit-text-stroke:0.15px #34404a;">Level</div>
<div class="t" style="left:0;top:0;transform:translate(123.04px,514.74px) rotate(-90deg) scaleX(0.984);font-size:12px;line-height:12px;color:#34404a;-webkit-text-stroke:0.15px #34404a;">Phase</div>
<svg class="r" style="left:140px;top:257.5px;" width="860" height="159.0" viewBox="0 0 860 159.0"><rect x="48.55" y="6.00" width="1" height="149.00" fill="#abbfcc" opacity="0.85"/><rect x="59.59" y="6.00" width="1" height="149.00" fill="#abbfcc" opacity="0.85"/><rect x="70.64" y="6.00" width="1" height="149.00" fill="#abbfcc" opacity="0.85"/><rect x="81.68" y="6.00" width="1" height="149.00" fill="#abbfcc" opacity="0.85"/><rect x="92.73" y="6.00" width="1" height="149.00" fill="#abbfcc" opacity="0.85"/><rect x="103.78" y="6.00" width="1" height="149.00" fill="#abbfcc" opacity="0.85"/><rect x="114.82" y="6.00" width="1" height="149.00" fill="#abbfcc" opacity="0.85"/><rect x="125.87" y="6.00" width="1" height="149.00" fill="#abbfcc" opacity="0.85"/><rect x="136.91" y="6.00" width="1" height="149.00" fill="#abbfcc" opacity="0.85"/><rect x="147.96" y="6.00" width="1" height="149.00" fill="#abbfcc" opacity="0.85"/><rect x="159.01" y="6.00" width="1" height="149.00" fill="#abbfcc" opacity="0.85"/><rect x="170.05" y="6.00" width="1" height="149.00" fill="#abbfcc" opacity="0.85"/><rect x="181.10" y="6.00" width="1" height="149.00" fill="#abbfcc" opacity="0.85"/><rect x="192.14" y="6.00" width="1" height="149.00" fill="#abbfcc" opacity="0.85"/><rect x="203.19" y="6.00" width="1" height="149.00" fill="#abbfcc" opacity="0.85"/><rect x="214.24" y="6.00" width="1" height="149.00" fill="#abbfcc" opacity="0.85"/><rect x="225.28" y="6.00" width="1" height="149.00" fill="#abbfcc" opacity="0.85"/><rect x="236.33" y="6.00" width="1" height="149.00" fill="#abbfcc" opacity="0.85"/><rect x="247.37" y="6.00" width="1" height="149.00" fill="#abbfcc" opacity="0.85"/><rect x="258.42" y="6.00" width="1" height="149.00" fill="#abbfcc" opacity="0.85"/><rect x="269.47" y="6.00" width="1" height="149.00" fill="#abbfcc" opacity="0.85"/><rect x="280.51" y="6.00" width="1" height="149.00" fill="#abbfcc" opacity="0.85"/><rect x="291.56" y="6.00" width="1" height="149.00" fill="#abbfcc" opacity="0.85"/><rect x="302.60" y="6.00" width="1" height="149.00" fill="#abbfcc" opacity="0.85"/><rect x="313.65" y="6.00" width="1" height="149.00" fill="#abbfcc" opacity="0.85"/><rect x="324.70" y="6.00" width="1" height="149.00" fill="#abbfcc" opacity="0.85"/><rect x="335.74" y="6.00" width="1" height="149.00" fill="#abbfcc" opacity="0.85"/><rect x="346.79" y="6.00" width="1" height="149.00" fill="#abbfcc" opacity="0.85"/><rect x="357.83" y="6.00" width="1" height="149.00" fill="#abbfcc" opacity="0.85"/><rect x="368.88" y="6.00" width="1" height="149.00" fill="#abbfcc" opacity="0.85"/><rect x="379.93" y="6.00" width="1" height="149.00" fill="#abbfcc" opacity="0.85"/><rect x="390.97" y="6.00" width="1" height="149.00" fill="#abbfcc" opacity="0.85"/><rect x="402.02" y="6.00" width="1" height="149.00" fill="#abbfcc" opacity="0.85"/><rect x="413.06" y="6.00" width="1" height="149.00" fill="#abbfcc" opacity="0.85"/><rect x="424.11" y="6.00" width="1" height="149.00" fill="#abbfcc" opacity="0.85"/><rect x="435.16" y="6.00" width="1" height="149.00" fill="#abbfcc" opacity="0.85"/><rect x="446.20" y="6.00" width="1" height="149.00" fill="#abbfcc" opacity="0.85"/><rect x="457.25" y="6.00" width="1" height="149.00" fill="#abbfcc" opacity="0.85"/><rect x="468.29" y="6.00" width="1" height="149.00" fill="#abbfcc" opacity="0.85"/><rect x="479.34" y="6.00" width="1" height="149.00" fill="#abbfcc" opacity="0.85"/><rect x="490.39" y="6.00" width="1" height="149.00" fill="#abbfcc" opacity="0.85"/><rect x="501.43" y="6.00" width="1" height="149.00" fill="#abbfcc" opacity="0.85"/><rect x="512.48" y="6.00" width="1" height="149.00" fill="#abbfcc" opacity="0.85"/><rect x="523.52" y="6.00" width="1" height="149.00" fill="#abbfcc" opacity="0.85"/><rect x="534.57" y="6.00" width="1" height="149.00" fill="#abbfcc" opacity="0.85"/><rect x="545.62" y="6.00" width="1" height="149.00" fill="#abbfcc" opacity="0.85"/><rect x="556.66" y="6.00" width="1" height="149.00" fill="#abbfcc" opacity="0.85"/><rect x="567.71" y="6.00" width="1" height="149.00" fill="#abbfcc" opacity="0.85"/><rect x="578.75" y="6.00" width="1" height="149.00" fill="#abbfcc" opacity="0.85"/><rect x="589.80" y="6.00" width="1" height="149.00" fill="#abbfcc" opacity="0.85"/><rect x="600.85" y="6.00" width="1" height="149.00" fill="#abbfcc" opacity="0.85"/><rect x="611.89" y="6.00" width="1" height="149.00" fill="#abbfcc" opacity="0.85"/><rect x="622.94" y="6.00" width="1" height="149.00" fill="#abbfcc" opacity="0.85"/><rect x="633.98" y="6.00" width="1" height="149.00" fill="#abbfcc" opacity="0.85"/><rect x="645.03" y="6.00" width="1" height="149.00" fill="#abbfcc" opacity="0.85"/><rect x="656.08" y="6.00" width="1" height="149.00" fill="#abbfcc" opacity="0.85"/><rect x="667.12" y="6.00" width="1" height="149.00" fill="#abbfcc" opacity="0.85"/><rect x="678.17" y="6.00" width="1" height="149.00" fill="#abbfcc" opacity="0.85"/><rect x="689.21" y="6.00" width="1" height="149.00" fill="#abbfcc" opacity="0.85"/><rect x="700.26" y="6.00" width="1" height="149.00" fill="#abbfcc" opacity="0.85"/><rect x="711.31" y="6.00" width="1" height="149.00" fill="#abbfcc" opacity="0.85"/><rect x="722.35" y="6.00" width="1" height="149.00" fill="#abbfcc" opacity="0.85"/><rect x="733.40" y="6.00" width="1" height="149.00" fill="#abbfcc" opacity="0.85"/><rect x="744.44" y="6.00" width="1" height="149.00" fill="#abbfcc" opacity="0.85"/><rect x="755.49" y="6.00" width="1" height="149.00" fill="#abbfcc" opacity="0.85"/><rect x="766.54" y="6.00" width="1" height="149.00" fill="#abbfcc" opacity="0.85"/><rect x="777.58" y="6.00" width="1" height="149.00" fill="#abbfcc" opacity="0.85"/><rect x="788.63" y="6.00" width="1" height="149.00" fill="#abbfcc" opacity="0.85"/><rect x="799.67" y="6.00" width="1" height="149.00" fill="#abbfcc" opacity="0.85"/><rect x="810.72" y="6.00" width="1" height="149.00" fill="#abbfcc" opacity="0.85"/><rect x="821.77" y="6.00" width="1" height="149.00" fill="#abbfcc" opacity="0.85"/><rect x="832.81" y="6.00" width="1" height="149.00" fill="#abbfcc" opacity="0.85"/><rect x="843.86" y="6.00" width="1" height="149.00" fill="#abbfcc" opacity="0.85"/><rect x="38.00" y="12.95" width="818.00" height="1" fill="#98aebd" opacity="0.8"/><rect x="38.00" y="20.40" width="818.00" height="1" fill="#9fb4c2" opacity="0.8"/><rect x="38.00" y="27.85" width="818.00" height="1" fill="#98aebd" opacity="0.8"/><rect x="38.00" y="35.30" width="818.00" height="1" fill="#a9bdca" opacity="0.8"/><rect x="38.00" y="42.75" width="818.00" height="1" fill="#98aebd" opacity="0.8"/><rect x="38.00" y="50.20" width="818.00" height="1" fill="#9fb4c2" opacity="0.8"/><rect x="38.00" y="57.65" width="818.00" height="1" fill="#98aebd" opacity="0.8"/><rect x="38.00" y="65.10" width="818.00" height="1" fill="#a9bdca" opacity="0.8"/><rect x="38.00" y="72.55" width="818.00" height="1" fill="#98aebd" opacity="0.8"/><rect x="38.00" y="80.00" width="818.00" height="1" fill="#9fb4c2" opacity="0.8"/><rect x="38.00" y="87.45" width="818.00" height="1" fill="#98aebd" opacity="0.8"/><rect x="38.00" y="94.90" width="818.00" height="1" fill="#a9bdca" opacity="0.8"/><rect x="38.00" y="102.35" width="818.00" height="1" fill="#98aebd" opacity="0.8"/><rect x="38.00" y="109.80" width="818.00" height="1" fill="#9fb4c2" opacity="0.8"/><rect x="38.00" y="117.25" width="818.00" height="1" fill="#98aebd" opacity="0.8"/><rect x="38.00" y="124.70" width="818.00" height="1" fill="#a9bdca" opacity="0.8"/><rect x="38.00" y="132.15" width="818.00" height="1" fill="#98aebd" opacity="0.8"/><rect x="38.00" y="139.60" width="818.00" height="1" fill="#9fb4c2" opacity="0.8"/><rect x="38.00" y="147.05" width="818.00" height="1" fill="#98aebd" opacity="0.8"/><rect x="38.00" y="6.00" width="11" height="149.00" fill="#5779a6"/><rect x="38.00" y="12.95" width="11" height="1" fill="#6283ac" opacity="0.7"/><rect x="38.00" y="20.40" width="11" height="1" fill="#6283ac" opacity="0.7"/><rect x="38.00" y="27.85" width="11" height="1" fill="#6283ac" opacity="0.7"/><rect x="38.00" y="35.30" width="11" height="1" fill="#6283ac" opacity="0.7"/><rect x="38.00" y="42.75" width="11" height="1" fill="#6283ac" opacity="0.7"/><rect x="38.00" y="50.20" width="11" height="1" fill="#6283ac" opacity="0.7"/><rect x="38.00" y="57.65" width="11" height="1" fill="#6283ac" opacity="0.7"/><rect x="38.00" y="65.10" width="11" height="1" fill="#6283ac" opacity="0.7"/><rect x="38.00" y="72.55" width="11" height="1" fill="#6283ac" opacity="0.7"/><rect x="38.00" y="80.00" width="11" height="1" fill="#6283ac" opacity="0.7"/><rect x="38.00" y="87.45" width="11" height="1" fill="#6283ac" opacity="0.7"/><rect x="38.00" y="94.90" width="11" height="1" fill="#6283ac" opacity="0.7"/><rect x="38.00" y="102.35" width="11" height="1" fill="#6283ac" opacity="0.7"/><rect x="38.00" y="109.80" width="11" height="1" fill="#6283ac" opacity="0.7"/><rect x="38.00" y="117.25" width="11" height="1" fill="#6283ac" opacity="0.7"/><rect x="38.00" y="124.70" width="11" height="1" fill="#6283ac" opacity="0.7"/><rect x="38.00" y="132.15" width="11" height="1" fill="#6283ac" opacity="0.7"/><rect x="38.00" y="139.60" width="11" height="1" fill="#6283ac" opacity="0.7"/><rect x="38.00" y="147.05" width="11" height="1" fill="#6283ac" opacity="0.7"/><rect x="49.05" y="6.00" width="11" height="149.00" fill="#5779a6"/><rect x="49.05" y="12.95" width="11" height="1" fill="#6283ac" opacity="0.7"/><rect x="49.05" y="20.40" width="11" height="1" fill="#6283ac" opacity="0.7"/><rect x="49.05" y="27.85" width="11" height="1" fill="#6283ac" opacity="0.7"/><rect x="49.05" y="35.30" width="11" height="1" fill="#6283ac" opacity="0.7"/><rect x="49.05" y="42.75" width="11" height="1" fill="#6283ac" opacity="0.7"/><rect x="49.05" y="50.20" width="11" height="1" fill="#6283ac" opacity="0.7"/><rect x="49.05" y="57.65" width="11" height="1" fill="#6283ac" opacity="0.7"/><rect x="49.05" y="65.10" width="11" height="1" fill="#6283ac" opacity="0.7"/><rect x="49.05" y="72.55" width="11" height="1" fill="#6283ac" opacity="0.7"/><rect x="49.05" y="80.00" width="11" height="1" fill="#6283ac" opacity="0.7"/><rect x="49.05" y="87.45" width="11" height="1" fill="#6283ac" opacity="0.7"/><rect x="49.05" y="94.90" width="11" height="1" fill="#6283ac" opacity="0.7"/><rect x="49.05" y="102.35" width="11" height="1" fill="#6283ac" opacity="0.7"/><rect x="49.05" y="109.80" width="11" height="1" fill="#6283ac" opacity="0.7"/><rect x="49.05" y="117.25" width="11" height="1" fill="#6283ac" opacity="0.7"/><rect x="49.05" y="124.70" width="11" height="1" fill="#6283ac" opacity="0.7"/><rect x="49.05" y="132.15" width="11" height="1" fill="#6283ac" opacity="0.7"/><rect x="49.05" y="139.60" width="11" height="1" fill="#6283ac" opacity="0.7"/><rect x="49.05" y="147.05" width="11" height="1" fill="#6283ac" opacity="0.7"/><rect x="71.14" y="6.00" width="11" height="149.00" fill="#5779a6"/><rect x="71.14" y="12.95" width="11" height="1" fill="#6283ac" opacity="0.7"/><rect x="71.14" y="20.40" width="11" height="1" fill="#6283ac" opacity="0.7"/><rect x="71.14" y="27.85" width="11" height="1" fill="#6283ac" opacity="0.7"/><rect x="71.14" y="35.30" width="11" height="1" fill="#6283ac" opacity="0.7"/><rect x="71.14" y="42.75" width="11" height="1" fill="#6283ac" opacity="0.7"/><rect x="71.14" y="50.20" width="11" height="1" fill="#6283ac" opacity="0.7"/><rect x="71.14" y="57.65" width="11" height="1" fill="#6283ac" opacity="0.7"/><rect x="71.14" y="65.10" width="11" height="1" fill="#6283ac" opacity="0.7"/><rect x="71.14" y="72.55" width="11" height="1" fill="#6283ac" opacity="0.7"/><rect x="71.14" y="80.00" width="11" height="1" fill="#6283ac" opacity="0.7"/><rect x="71.14" y="87.45" width="11" height="1" fill="#6283ac" opacity="0.7"/><rect x="71.14" y="94.90" width="11" height="1" fill="#6283ac" opacity="0.7"/><rect x="71.14" y="102.35" width="11" height="1" fill="#6283ac" opacity="0.7"/><rect x="71.14" y="109.80" width="11" height="1" fill="#6283ac" opacity="0.7"/><rect x="71.14" y="117.25" width="11" height="1" fill="#6283ac" opacity="0.7"/><rect x="71.14" y="124.70" width="11" height="1" fill="#6283ac" opacity="0.7"/><rect x="71.14" y="132.15" width="11" height="1" fill="#6283ac" opacity="0.7"/><rect x="71.14" y="139.60" width="11" height="1" fill="#6283ac" opacity="0.7"/><rect x="71.14" y="147.05" width="11" height="1" fill="#6283ac" opacity="0.7"/><rect x="115.32" y="6.00" width="11" height="149.00" fill="#5779a6"/><rect x="115.32" y="12.95" width="11" height="1" fill="#6283ac" opacity="0.7"/><rect x="115.32" y="20.40" width="11" height="1" fill="#6283ac" opacity="0.7"/><rect x="115.32" y="27.85" width="11" height="1" fill="#6283ac" opacity="0.7"/><rect x="115.32" y="35.30" width="11" height="1" fill="#6283ac" opacity="0.7"/><rect x="115.32" y="42.75" width="11" height="1" fill="#6283ac" opacity="0.7"/><rect x="115.32" y="50.20" width="11" height="1" fill="#6283ac" opacity="0.7"/><rect x="115.32" y="57.65" width="11" height="1" fill="#6283ac" opacity="0.7"/><rect x="115.32" y="65.10" width="11" height="1" fill="#6283ac" opacity="0.7"/><rect x="115.32" y="72.55" width="11" height="1" fill="#6283ac" opacity="0.7"/><rect x="115.32" y="80.00" width="11" height="1" fill="#6283ac" opacity="0.7"/><rect x="115.32" y="87.45" width="11" height="1" fill="#6283ac" opacity="0.7"/><rect x="115.32" y="94.90" width="11" height="1" fill="#6283ac" opacity="0.7"/><rect x="115.32" y="102.35" width="11" height="1" fill="#6283ac" opacity="0.7"/><rect x="115.32" y="109.80" width="11" height="1" fill="#6283ac" opacity="0.7"/><rect x="115.32" y="117.25" width="11" height="1" fill="#6283ac" opacity="0.7"/><rect x="115.32" y="124.70" width="11" height="1" fill="#6283ac" opacity="0.7"/><rect x="115.32" y="132.15" width="11" height="1" fill="#6283ac" opacity="0.7"/><rect x="115.32" y="139.60" width="11" height="1" fill="#6283ac" opacity="0.7"/><rect x="115.32" y="147.05" width="11" height="1" fill="#6283ac" opacity="0.7"/><rect x="203.69" y="6.00" width="11" height="149.00" fill="#5779a6"/><rect x="203.69" y="12.95" width="11" height="1" fill="#6283ac" opacity="0.7"/><rect x="203.69" y="20.40" width="11" height="1" fill="#6283ac" opacity="0.7"/><rect x="203.69" y="27.85" width="11" height="1" fill="#6283ac" opacity="0.7"/><rect x="203.69" y="35.30" width="11" height="1" fill="#6283ac" opacity="0.7"/><rect x="203.69" y="42.75" width="11" height="1" fill="#6283ac" opacity="0.7"/><rect x="203.69" y="50.20" width="11" height="1" fill="#6283ac" opacity="0.7"/><rect x="203.69" y="57.65" width="11" height="1" fill="#6283ac" opacity="0.7"/><rect x="203.69" y="65.10" width="11" height="1" fill="#6283ac" opacity="0.7"/><rect x="203.69" y="72.55" width="11" height="1" fill="#6283ac" opacity="0.7"/><rect x="203.69" y="80.00" width="11" height="1" fill="#6283ac" opacity="0.7"/><rect x="203.69" y="87.45" width="11" height="1" fill="#6283ac" opacity="0.7"/><rect x="203.69" y="94.90" width="11" height="1" fill="#6283ac" opacity="0.7"/><rect x="203.69" y="102.35" width="11" height="1" fill="#6283ac" opacity="0.7"/><rect x="203.69" y="109.80" width="11" height="1" fill="#6283ac" opacity="0.7"/><rect x="203.69" y="117.25" width="11" height="1" fill="#6283ac" opacity="0.7"/><rect x="203.69" y="124.70" width="11" height="1" fill="#6283ac" opacity="0.7"/><rect x="203.69" y="132.15" width="11" height="1" fill="#6283ac" opacity="0.7"/><rect x="203.69" y="139.60" width="11" height="1" fill="#6283ac" opacity="0.7"/><rect x="203.69" y="147.05" width="11" height="1" fill="#6283ac" opacity="0.7"/><rect x="380.43" y="6.00" width="11" height="149.00" fill="#5779a6"/><rect x="380.43" y="12.95" width="11" height="1" fill="#6283ac" opacity="0.7"/><rect x="380.43" y="20.40" width="11" height="1" fill="#6283ac" opacity="0.7"/><rect x="380.43" y="27.85" width="11" height="1" fill="#6283ac" opacity="0.7"/><rect x="380.43" y="35.30" width="11" height="1" fill="#6283ac" opacity="0.7"/><rect x="380.43" y="42.75" width="11" height="1" fill="#6283ac" opacity="0.7"/><rect x="380.43" y="50.20" width="11" height="1" fill="#6283ac" opacity="0.7"/><rect x="380.43" y="57.65" width="11" height="1" fill="#6283ac" opacity="0.7"/><rect x="380.43" y="65.10" width="11" height="1" fill="#6283ac" opacity="0.7"/><rect x="380.43" y="72.55" width="11" height="1" fill="#6283ac" opacity="0.7"/><rect x="380.43" y="80.00" width="11" height="1" fill="#6283ac" opacity="0.7"/><rect x="380.43" y="87.45" width="11" height="1" fill="#6283ac" opacity="0.7"/><rect x="380.43" y="94.90" width="11" height="1" fill="#6283ac" opacity="0.7"/><rect x="380.43" y="102.35" width="11" height="1" fill="#6283ac" opacity="0.7"/><rect x="380.43" y="109.80" width="11" height="1" fill="#6283ac" opacity="0.7"/><rect x="380.43" y="117.25" width="11" height="1" fill="#6283ac" opacity="0.7"/><rect x="380.43" y="124.70" width="11" height="1" fill="#6283ac" opacity="0.7"/><rect x="380.43" y="132.15" width="11" height="1" fill="#6283ac" opacity="0.7"/><rect x="380.43" y="139.60" width="11" height="1" fill="#6283ac" opacity="0.7"/><rect x="380.43" y="147.05" width="11" height="1" fill="#6283ac" opacity="0.7"/><rect x="733.90" y="6.00" width="11" height="149.00" fill="#5779a6"/><rect x="733.90" y="12.95" width="11" height="1" fill="#6283ac" opacity="0.7"/><rect x="733.90" y="20.40" width="11" height="1" fill="#6283ac" opacity="0.7"/><rect x="733.90" y="27.85" width="11" height="1" fill="#6283ac" opacity="0.7"/><rect x="733.90" y="35.30" width="11" height="1" fill="#6283ac" opacity="0.7"/><rect x="733.90" y="42.75" width="11" height="1" fill="#6283ac" opacity="0.7"/><rect x="733.90" y="50.20" width="11" height="1" fill="#6283ac" opacity="0.7"/><rect x="733.90" y="57.65" width="11" height="1" fill="#6283ac" opacity="0.7"/><rect x="733.90" y="65.10" width="11" height="1" fill="#6283ac" opacity="0.7"/><rect x="733.90" y="72.55" width="11" height="1" fill="#6283ac" opacity="0.7"/><rect x="733.90" y="80.00" width="11" height="1" fill="#6283ac" opacity="0.7"/><rect x="733.90" y="87.45" width="11" height="1" fill="#6283ac" opacity="0.7"/><rect x="733.90" y="94.90" width="11" height="1" fill="#6283ac" opacity="0.7"/><rect x="733.90" y="102.35" width="11" height="1" fill="#6283ac" opacity="0.7"/><rect x="733.90" y="109.80" width="11" height="1" fill="#6283ac" opacity="0.7"/><rect x="733.90" y="117.25" width="11" height="1" fill="#6283ac" opacity="0.7"/><rect x="733.90" y="124.70" width="11" height="1" fill="#6283ac" opacity="0.7"/><rect x="733.90" y="132.15" width="11" height="1" fill="#6283ac" opacity="0.7"/><rect x="733.90" y="139.60" width="11" height="1" fill="#6283ac" opacity="0.7"/><rect x="733.90" y="147.05" width="11" height="1" fill="#6283ac" opacity="0.7"/><rect x="38.80" y="6.00" width="9.1" height="149.00" fill="#0b1b34"/><rect x="49.85" y="153.20" width="9.1" height="1.80" fill="#0b1b34"/><rect x="60.89" y="153.20" width="9.1" height="1.80" fill="#141719"/><rect x="71.94" y="153.20" width="9.1" height="1.80" fill="#0b1b34"/><rect x="82.98" y="153.20" width="9.1" height="1.80" fill="#141719"/><rect x="94.03" y="153.20" width="9.1" height="1.80" fill="#141719"/><rect x="105.08" y="153.20" width="9.1" height="1.80" fill="#141719"/><rect x="116.12" y="153.20" width="9.1" height="1.80" fill="#0b1b34"/><rect x="127.17" y="153.20" width="9.1" height="1.80" fill="#141719"/><rect x="138.21" y="153.20" width="9.1" height="1.80" fill="#141719"/><rect x="149.26" y="153.20" width="9.1" height="1.80" fill="#141719"/><rect x="160.31" y="153.20" width="9.1" height="1.80" fill="#141719"/><rect x="171.35" y="153.20" width="9.1" height="1.80" fill="#141719"/><rect x="182.40" y="153.20" width="9.1" height="1.80" fill="#141719"/><rect x="193.44" y="153.20" width="9.1" height="1.80" fill="#141719"/><rect x="204.49" y="153.20" width="9.1" height="1.80" fill="#0b1b34"/><rect x="215.54" y="153.20" width="9.1" height="1.80" fill="#141719"/><rect x="226.58" y="153.20" width="9.1" height="1.80" fill="#141719"/><rect x="237.63" y="153.20" width="9.1" height="1.80" fill="#141719"/><rect x="248.67" y="153.20" width="9.1" height="1.80" fill="#141719"/><rect x="259.72" y="153.20" width="9.1" height="1.80" fill="#141719"/><rect x="270.77" y="153.20" width="9.1" height="1.80" fill="#141719"/><rect x="281.81" y="153.20" width="9.1" height="1.80" fill="#141719"/><rect x="292.86" y="153.20" width="9.1" height="1.80" fill="#141719"/><rect x="303.90" y="153.20" width="9.1" height="1.80" fill="#141719"/><rect x="314.95" y="153.20" width="9.1" height="1.80" fill="#141719"/><rect x="326.00" y="153.20" width="9.1" height="1.80" fill="#141719"/><rect x="337.04" y="153.20" width="9.1" height="1.80" fill="#141719"/><rect x="348.09" y="153.20" width="9.1" height="1.80" fill="#141719"/><rect x="359.13" y="153.20" width="9.1" height="1.80" fill="#141719"/><rect x="370.18" y="153.20" width="9.1" height="1.80" fill="#141719"/><rect x="381.23" y="153.20" width="9.1" height="1.80" fill="#0b1b34"/><rect x="392.27" y="153.20" width="9.1" height="1.80" fill="#141719"/><rect x="403.32" y="153.20" width="9.1" height="1.80" fill="#141719"/><rect x="414.36" y="153.20" width="9.1" height="1.80" fill="#141719"/><rect x="425.41" y="153.20" width="9.1" height="1.80" fill="#141719"/><rect x="436.46" y="153.20" width="9.1" height="1.80" fill="#141719"/><rect x="447.50" y="153.20" width="9.1" height="1.80" fill="#141719"/><rect x="458.55" y="153.20" width="9.1" height="1.80" fill="#141719"/><rect x="469.59" y="153.20" width="9.1" height="1.80" fill="#141719"/><rect x="480.64" y="153.20" width="9.1" height="1.80" fill="#141719"/><rect x="491.69" y="153.20" width="9.1" height="1.80" fill="#141719"/><rect x="502.73" y="153.20" width="9.1" height="1.80" fill="#141719"/><rect x="513.78" y="153.20" width="9.1" height="1.80" fill="#141719"/><rect x="524.82" y="153.20" width="9.1" height="1.80" fill="#141719"/><rect x="535.87" y="153.20" width="9.1" height="1.80" fill="#141719"/><rect x="546.92" y="153.20" width="9.1" height="1.80" fill="#141719"/><rect x="557.96" y="153.20" width="9.1" height="1.80" fill="#141719"/><rect x="569.01" y="153.20" width="9.1" height="1.80" fill="#141719"/><rect x="580.05" y="153.20" width="9.1" height="1.80" fill="#141719"/><rect x="591.10" y="153.20" width="9.1" height="1.80" fill="#141719"/><rect x="602.15" y="153.20" width="9.1" height="1.80" fill="#141719"/><rect x="613.19" y="153.20" width="9.1" height="1.80" fill="#141719"/><rect x="624.24" y="153.20" width="9.1" height="1.80" fill="#141719"/><rect x="635.28" y="153.20" width="9.1" height="1.80" fill="#141719"/><rect x="646.33" y="153.20" width="9.1" height="1.80" fill="#141719"/><rect x="657.38" y="153.20" width="9.1" height="1.80" fill="#141719"/><rect x="668.42" y="153.20" width="9.1" height="1.80" fill="#141719"/><rect x="679.47" y="153.20" width="9.1" height="1.80" fill="#141719"/><rect x="690.51" y="153.20" width="9.1" height="1.80" fill="#141719"/><rect x="701.56" y="153.20" width="9.1" height="1.80" fill="#141719"/><rect x="712.61" y="153.20" width="9.1" height="1.80" fill="#141719"/><rect x="723.65" y="153.20" width="9.1" height="1.80" fill="#141719"/><rect x="734.70" y="153.20" width="9.1" height="1.80" fill="#0b1b34"/><rect x="745.74" y="153.20" width="9.1" height="1.80" fill="#141719"/><rect x="756.79" y="153.20" width="9.1" height="1.80" fill="#141719"/><rect x="767.84" y="153.20" width="9.1" height="1.80" fill="#141719"/><rect x="778.88" y="153.20" width="9.1" height="1.80" fill="#141719"/><rect x="789.93" y="153.20" width="9.1" height="1.80" fill="#141719"/><rect x="800.97" y="153.20" width="9.1" height="1.80" fill="#141719"/><rect x="812.02" y="153.20" width="9.1" height="1.80" fill="#141719"/><rect x="823.07" y="153.20" width="9.1" height="1.80" fill="#141719"/><rect x="834.11" y="153.20" width="9.1" height="1.80" fill="#141719"/><rect x="845.16" y="153.20" width="9.1" height="1.80" fill="#141719"/><rect x="37.00" y="6.00" width="1.2" height="149.50" fill="#5a6873"/><rect x="37.00" y="154.40" width="819.00" height="1" fill="#46535d"/></svg>
<div class="t" style="left:0;top:0;transform:translate(178.21px,407.42px) rotate(-90deg) scaleX(0.862);font-size:10.5px;line-height:10.5px;color:#d5e0ea;-webkit-text-stroke:0.1px #d5e0ea;">Fundamental</div>
<div class="t" style="left:0;top:0;transform:translate(189.31px,407.66px) rotate(-90deg) scaleX(0.893);font-size:10.2px;line-height:10.2px;color:#d5e0ea;-webkit-text-stroke:0.1px #d5e0ea;">+1 oct</div>
<div class="t" style="left:0;top:0;transform:translate(211.40px,407.66px) rotate(-90deg) scaleX(0.893);font-size:10.2px;line-height:10.2px;color:#d5e0ea;-webkit-text-stroke:0.1px #d5e0ea;">+2 oct</div>
<div class="t" style="left:0;top:0;transform:translate(255.58px,407.66px) rotate(-90deg) scaleX(0.893);font-size:10.2px;line-height:10.2px;color:#d5e0ea;-webkit-text-stroke:0.1px #d5e0ea;">+3 oct</div>
<div class="t" style="left:0;top:0;transform:translate(343.95px,407.66px) rotate(-90deg) scaleX(0.893);font-size:10.2px;line-height:10.2px;color:#d5e0ea;-webkit-text-stroke:0.1px #d5e0ea;">+4 oct</div>
<div class="t" style="left:0;top:0;transform:translate(520.69px,407.66px) rotate(-90deg) scaleX(0.893);font-size:10.2px;line-height:10.2px;color:#d5e0ea;-webkit-text-stroke:0.1px #d5e0ea;">+5 oct</div>
<div class="t" style="left:0;top:0;transform:translate(874.16px,407.66px) rotate(-90deg) scaleX(0.893);font-size:10.2px;line-height:10.2px;color:#d5e0ea;-webkit-text-stroke:0.1px #d5e0ea;">+6 oct</div>
<div class="t" style="left:148.07px;top:265.24px;font-size:9.3px;line-height:9.3px;color:#3b4853;transform:scaleX(0.852);">100.0%</div>
<div class="t" style="left:152.42px;top:288.84px;font-size:9.3px;line-height:9.3px;color:#3b4853;transform:scaleX(0.852);">80.0%</div>
<div class="t" style="left:152.42px;top:318.74px;font-size:9.3px;line-height:9.3px;color:#3b4853;transform:scaleX(0.852);">60.0%</div>
<div class="t" style="left:152.42px;top:348.34px;font-size:9.3px;line-height:9.3px;color:#3b4853;transform:scaleX(0.852);">40.0%</div>
<div class="t" style="left:152.42px;top:378.34px;font-size:9.3px;line-height:9.3px;color:#3b4853;transform:scaleX(0.852);">20.0%</div>
<div class="t" style="left:152.42px;top:402.44px;font-size:9.3px;line-height:9.3px;color:#3b4853;transform:scaleX(0.852);">0.00%</div>
<svg class="r" style="left:140px;top:416.3px;" width="860" height="159.40000000000003" viewBox="0 0 860 159.40000000000003"><rect x="48.55" y="6.00" width="1" height="149.40" fill="#abbfcc" opacity="0.85"/><rect x="59.59" y="6.00" width="1" height="149.40" fill="#abbfcc" opacity="0.85"/><rect x="70.64" y="6.00" width="1" height="149.40" fill="#abbfcc" opacity="0.85"/><rect x="81.68" y="6.00" width="1" height="149.40" fill="#abbfcc" opacity="0.85"/><rect x="92.73" y="6.00" width="1" height="149.40" fill="#abbfcc" opacity="0.85"/><rect x="103.78" y="6.00" width="1" height="149.40" fill="#abbfcc" opacity="0.85"/><rect x="114.82" y="6.00" width="1" height="149.40" fill="#abbfcc" opacity="0.85"/><rect x="125.87" y="6.00" width="1" height="149.40" fill="#abbfcc" opacity="0.85"/><rect x="136.91" y="6.00" width="1" height="149.40" fill="#abbfcc" opacity="0.85"/><rect x="147.96" y="6.00" width="1" height="149.40" fill="#abbfcc" opacity="0.85"/><rect x="159.01" y="6.00" width="1" height="149.40" fill="#abbfcc" opacity="0.85"/><rect x="170.05" y="6.00" width="1" height="149.40" fill="#abbfcc" opacity="0.85"/><rect x="181.10" y="6.00" width="1" height="149.40" fill="#abbfcc" opacity="0.85"/><rect x="192.14" y="6.00" width="1" height="149.40" fill="#abbfcc" opacity="0.85"/><rect x="203.19" y="6.00" width="1" height="149.40" fill="#abbfcc" opacity="0.85"/><rect x="214.24" y="6.00" width="1" height="149.40" fill="#abbfcc" opacity="0.85"/><rect x="225.28" y="6.00" width="1" height="149.40" fill="#abbfcc" opacity="0.85"/><rect x="236.33" y="6.00" width="1" height="149.40" fill="#abbfcc" opacity="0.85"/><rect x="247.37" y="6.00" width="1" height="149.40" fill="#abbfcc" opacity="0.85"/><rect x="258.42" y="6.00" width="1" height="149.40" fill="#abbfcc" opacity="0.85"/><rect x="269.47" y="6.00" width="1" height="149.40" fill="#abbfcc" opacity="0.85"/><rect x="280.51" y="6.00" width="1" height="149.40" fill="#abbfcc" opacity="0.85"/><rect x="291.56" y="6.00" width="1" height="149.40" fill="#abbfcc" opacity="0.85"/><rect x="302.60" y="6.00" width="1" height="149.40" fill="#abbfcc" opacity="0.85"/><rect x="313.65" y="6.00" width="1" height="149.40" fill="#abbfcc" opacity="0.85"/><rect x="324.70" y="6.00" width="1" height="149.40" fill="#abbfcc" opacity="0.85"/><rect x="335.74" y="6.00" width="1" height="149.40" fill="#abbfcc" opacity="0.85"/><rect x="346.79" y="6.00" width="1" height="149.40" fill="#abbfcc" opacity="0.85"/><rect x="357.83" y="6.00" width="1" height="149.40" fill="#abbfcc" opacity="0.85"/><rect x="368.88" y="6.00" width="1" height="149.40" fill="#abbfcc" opacity="0.85"/><rect x="379.93" y="6.00" width="1" height="149.40" fill="#abbfcc" opacity="0.85"/><rect x="390.97" y="6.00" width="1" height="149.40" fill="#abbfcc" opacity="0.85"/><rect x="402.02" y="6.00" width="1" height="149.40" fill="#abbfcc" opacity="0.85"/><rect x="413.06" y="6.00" width="1" height="149.40" fill="#abbfcc" opacity="0.85"/><rect x="424.11" y="6.00" width="1" height="149.40" fill="#abbfcc" opacity="0.85"/><rect x="435.16" y="6.00" width="1" height="149.40" fill="#abbfcc" opacity="0.85"/><rect x="446.20" y="6.00" width="1" height="149.40" fill="#abbfcc" opacity="0.85"/><rect x="457.25" y="6.00" width="1" height="149.40" fill="#abbfcc" opacity="0.85"/><rect x="468.29" y="6.00" width="1" height="149.40" fill="#abbfcc" opacity="0.85"/><rect x="479.34" y="6.00" width="1" height="149.40" fill="#abbfcc" opacity="0.85"/><rect x="490.39" y="6.00" width="1" height="149.40" fill="#abbfcc" opacity="0.85"/><rect x="501.43" y="6.00" width="1" height="149.40" fill="#abbfcc" opacity="0.85"/><rect x="512.48" y="6.00" width="1" height="149.40" fill="#abbfcc" opacity="0.85"/><rect x="523.52" y="6.00" width="1" height="149.40" fill="#abbfcc" opacity="0.85"/><rect x="534.57" y="6.00" width="1" height="149.40" fill="#abbfcc" opacity="0.85"/><rect x="545.62" y="6.00" width="1" height="149.40" fill="#abbfcc" opacity="0.85"/><rect x="556.66" y="6.00" width="1" height="149.40" fill="#abbfcc" opacity="0.85"/><rect x="567.71" y="6.00" width="1" height="149.40" fill="#abbfcc" opacity="0.85"/><rect x="578.75" y="6.00" width="1" height="149.40" fill="#abbfcc" opacity="0.85"/><rect x="589.80" y="6.00" width="1" height="149.40" fill="#abbfcc" opacity="0.85"/><rect x="600.85" y="6.00" width="1" height="149.40" fill="#abbfcc" opacity="0.85"/><rect x="611.89" y="6.00" width="1" height="149.40" fill="#abbfcc" opacity="0.85"/><rect x="622.94" y="6.00" width="1" height="149.40" fill="#abbfcc" opacity="0.85"/><rect x="633.98" y="6.00" width="1" height="149.40" fill="#abbfcc" opacity="0.85"/><rect x="645.03" y="6.00" width="1" height="149.40" fill="#abbfcc" opacity="0.85"/><rect x="656.08" y="6.00" width="1" height="149.40" fill="#abbfcc" opacity="0.85"/><rect x="667.12" y="6.00" width="1" height="149.40" fill="#abbfcc" opacity="0.85"/><rect x="678.17" y="6.00" width="1" height="149.40" fill="#abbfcc" opacity="0.85"/><rect x="689.21" y="6.00" width="1" height="149.40" fill="#abbfcc" opacity="0.85"/><rect x="700.26" y="6.00" width="1" height="149.40" fill="#abbfcc" opacity="0.85"/><rect x="711.31" y="6.00" width="1" height="149.40" fill="#abbfcc" opacity="0.85"/><rect x="722.35" y="6.00" width="1" height="149.40" fill="#abbfcc" opacity="0.85"/><rect x="733.40" y="6.00" width="1" height="149.40" fill="#abbfcc" opacity="0.85"/><rect x="744.44" y="6.00" width="1" height="149.40" fill="#abbfcc" opacity="0.85"/><rect x="755.49" y="6.00" width="1" height="149.40" fill="#abbfcc" opacity="0.85"/><rect x="766.54" y="6.00" width="1" height="149.40" fill="#abbfcc" opacity="0.85"/><rect x="777.58" y="6.00" width="1" height="149.40" fill="#abbfcc" opacity="0.85"/><rect x="788.63" y="6.00" width="1" height="149.40" fill="#abbfcc" opacity="0.85"/><rect x="799.67" y="6.00" width="1" height="149.40" fill="#abbfcc" opacity="0.85"/><rect x="810.72" y="6.00" width="1" height="149.40" fill="#abbfcc" opacity="0.85"/><rect x="821.77" y="6.00" width="1" height="149.40" fill="#abbfcc" opacity="0.85"/><rect x="832.81" y="6.00" width="1" height="149.40" fill="#abbfcc" opacity="0.85"/><rect x="843.86" y="6.00" width="1" height="149.40" fill="#abbfcc" opacity="0.85"/><rect x="38.00" y="12.97" width="818.00" height="1" fill="#98aebd" opacity="0.8"/><rect x="38.00" y="20.44" width="818.00" height="1" fill="#9fb4c2" opacity="0.8"/><rect x="38.00" y="27.91" width="818.00" height="1" fill="#98aebd" opacity="0.8"/><rect x="38.00" y="35.38" width="818.00" height="1" fill="#a9bdca" opacity="0.8"/><rect x="38.00" y="42.85" width="818.00" height="1" fill="#98aebd" opacity="0.8"/><rect x="38.00" y="50.32" width="818.00" height="1" fill="#9fb4c2" opacity="0.8"/><rect x="38.00" y="57.79" width="818.00" height="1" fill="#98aebd" opacity="0.8"/><rect x="38.00" y="65.26" width="818.00" height="1" fill="#a9bdca" opacity="0.8"/><rect x="38.00" y="72.73" width="818.00" height="1" fill="#98aebd" opacity="0.8"/><rect x="38.00" y="80.20" width="818.00" height="1" fill="#9fb4c2" opacity="0.8"/><rect x="38.00" y="87.67" width="818.00" height="1" fill="#98aebd" opacity="0.8"/><rect x="38.00" y="95.14" width="818.00" height="1" fill="#a9bdca" opacity="0.8"/><rect x="38.00" y="102.61" width="818.00" height="1" fill="#98aebd" opacity="0.8"/><rect x="38.00" y="110.08" width="818.00" height="1" fill="#9fb4c2" opacity="0.8"/><rect x="38.00" y="117.55" width="818.00" height="1" fill="#98aebd" opacity="0.8"/><rect x="38.00" y="125.02" width="818.00" height="1" fill="#a9bdca" opacity="0.8"/><rect x="38.00" y="132.49" width="818.00" height="1" fill="#98aebd" opacity="0.8"/><rect x="38.00" y="139.96" width="818.00" height="1" fill="#9fb4c2" opacity="0.8"/><rect x="38.00" y="147.43" width="818.00" height="1" fill="#98aebd" opacity="0.8"/><rect x="38.00" y="6.00" width="11" height="149.40" fill="#5779a6"/><rect x="38.00" y="12.97" width="11" height="1" fill="#6283ac" opacity="0.7"/><rect x="38.00" y="20.44" width="11" height="1" fill="#6283ac" opacity="0.7"/><rect x="38.00" y="27.91" width="11" height="1" fill="#6283ac" opacity="0.7"/><rect x="38.00" y="35.38" width="11" height="1" fill="#6283ac" opacity="0.7"/><rect x="38.00" y="42.85" width="11" height="1" fill="#6283ac" opacity="0.7"/><rect x="38.00" y="50.32" width="11" height="1" fill="#6283ac" opacity="0.7"/><rect x="38.00" y="57.79" width="11" height="1" fill="#6283ac" opacity="0.7"/><rect x="38.00" y="65.26" width="11" height="1" fill="#6283ac" opacity="0.7"/><rect x="38.00" y="72.73" width="11" height="1" fill="#6283ac" opacity="0.7"/><rect x="38.00" y="80.20" width="11" height="1" fill="#6283ac" opacity="0.7"/><rect x="38.00" y="87.67" width="11" height="1" fill="#6283ac" opacity="0.7"/><rect x="38.00" y="95.14" width="11" height="1" fill="#6283ac" opacity="0.7"/><rect x="38.00" y="102.61" width="11" height="1" fill="#6283ac" opacity="0.7"/><rect x="38.00" y="110.08" width="11" height="1" fill="#6283ac" opacity="0.7"/><rect x="38.00" y="117.55" width="11" height="1" fill="#6283ac" opacity="0.7"/><rect x="38.00" y="125.02" width="11" height="1" fill="#6283ac" opacity="0.7"/><rect x="38.00" y="132.49" width="11" height="1" fill="#6283ac" opacity="0.7"/><rect x="38.00" y="139.96" width="11" height="1" fill="#6283ac" opacity="0.7"/><rect x="38.00" y="147.43" width="11" height="1" fill="#6283ac" opacity="0.7"/><rect x="49.05" y="6.00" width="11" height="149.40" fill="#5779a6"/><rect x="49.05" y="12.97" width="11" height="1" fill="#6283ac" opacity="0.7"/><rect x="49.05" y="20.44" width="11" height="1" fill="#6283ac" opacity="0.7"/><rect x="49.05" y="27.91" width="11" height="1" fill="#6283ac" opacity="0.7"/><rect x="49.05" y="35.38" width="11" height="1" fill="#6283ac" opacity="0.7"/><rect x="49.05" y="42.85" width="11" height="1" fill="#6283ac" opacity="0.7"/><rect x="49.05" y="50.32" width="11" height="1" fill="#6283ac" opacity="0.7"/><rect x="49.05" y="57.79" width="11" height="1" fill="#6283ac" opacity="0.7"/><rect x="49.05" y="65.26" width="11" height="1" fill="#6283ac" opacity="0.7"/><rect x="49.05" y="72.73" width="11" height="1" fill="#6283ac" opacity="0.7"/><rect x="49.05" y="80.20" width="11" height="1" fill="#6283ac" opacity="0.7"/><rect x="49.05" y="87.67" width="11" height="1" fill="#6283ac" opacity="0.7"/><rect x="49.05" y="95.14" width="11" height="1" fill="#6283ac" opacity="0.7"/><rect x="49.05" y="102.61" width="11" height="1" fill="#6283ac" opacity="0.7"/><rect x="49.05" y="110.08" width="11" height="1" fill="#6283ac" opacity="0.7"/><rect x="49.05" y="117.55" width="11" height="1" fill="#6283ac" opacity="0.7"/><rect x="49.05" y="125.02" width="11" height="1" fill="#6283ac" opacity="0.7"/><rect x="49.05" y="132.49" width="11" height="1" fill="#6283ac" opacity="0.7"/><rect x="49.05" y="139.96" width="11" height="1" fill="#6283ac" opacity="0.7"/><rect x="49.05" y="147.43" width="11" height="1" fill="#6283ac" opacity="0.7"/><rect x="71.14" y="6.00" width="11" height="149.40" fill="#5779a6"/><rect x="71.14" y="12.97" width="11" height="1" fill="#6283ac" opacity="0.7"/><rect x="71.14" y="20.44" width="11" height="1" fill="#6283ac" opacity="0.7"/><rect x="71.14" y="27.91" width="11" height="1" fill="#6283ac" opacity="0.7"/><rect x="71.14" y="35.38" width="11" height="1" fill="#6283ac" opacity="0.7"/><rect x="71.14" y="42.85" width="11" height="1" fill="#6283ac" opacity="0.7"/><rect x="71.14" y="50.32" width="11" height="1" fill="#6283ac" opacity="0.7"/><rect x="71.14" y="57.79" width="11" height="1" fill="#6283ac" opacity="0.7"/><rect x="71.14" y="65.26" width="11" height="1" fill="#6283ac" opacity="0.7"/><rect x="71.14" y="72.73" width="11" height="1" fill="#6283ac" opacity="0.7"/><rect x="71.14" y="80.20" width="11" height="1" fill="#6283ac" opacity="0.7"/><rect x="71.14" y="87.67" width="11" height="1" fill="#6283ac" opacity="0.7"/><rect x="71.14" y="95.14" width="11" height="1" fill="#6283ac" opacity="0.7"/><rect x="71.14" y="102.61" width="11" height="1" fill="#6283ac" opacity="0.7"/><rect x="71.14" y="110.08" width="11" height="1" fill="#6283ac" opacity="0.7"/><rect x="71.14" y="117.55" width="11" height="1" fill="#6283ac" opacity="0.7"/><rect x="71.14" y="125.02" width="11" height="1" fill="#6283ac" opacity="0.7"/><rect x="71.14" y="132.49" width="11" height="1" fill="#6283ac" opacity="0.7"/><rect x="71.14" y="139.96" width="11" height="1" fill="#6283ac" opacity="0.7"/><rect x="71.14" y="147.43" width="11" height="1" fill="#6283ac" opacity="0.7"/><rect x="115.32" y="6.00" width="11" height="149.40" fill="#5779a6"/><rect x="115.32" y="12.97" width="11" height="1" fill="#6283ac" opacity="0.7"/><rect x="115.32" y="20.44" width="11" height="1" fill="#6283ac" opacity="0.7"/><rect x="115.32" y="27.91" width="11" height="1" fill="#6283ac" opacity="0.7"/><rect x="115.32" y="35.38" width="11" height="1" fill="#6283ac" opacity="0.7"/><rect x="115.32" y="42.85" width="11" height="1" fill="#6283ac" opacity="0.7"/><rect x="115.32" y="50.32" width="11" height="1" fill="#6283ac" opacity="0.7"/><rect x="115.32" y="57.79" width="11" height="1" fill="#6283ac" opacity="0.7"/><rect x="115.32" y="65.26" width="11" height="1" fill="#6283ac" opacity="0.7"/><rect x="115.32" y="72.73" width="11" height="1" fill="#6283ac" opacity="0.7"/><rect x="115.32" y="80.20" width="11" height="1" fill="#6283ac" opacity="0.7"/><rect x="115.32" y="87.67" width="11" height="1" fill="#6283ac" opacity="0.7"/><rect x="115.32" y="95.14" width="11" height="1" fill="#6283ac" opacity="0.7"/><rect x="115.32" y="102.61" width="11" height="1" fill="#6283ac" opacity="0.7"/><rect x="115.32" y="110.08" width="11" height="1" fill="#6283ac" opacity="0.7"/><rect x="115.32" y="117.55" width="11" height="1" fill="#6283ac" opacity="0.7"/><rect x="115.32" y="125.02" width="11" height="1" fill="#6283ac" opacity="0.7"/><rect x="115.32" y="132.49" width="11" height="1" fill="#6283ac" opacity="0.7"/><rect x="115.32" y="139.96" width="11" height="1" fill="#6283ac" opacity="0.7"/><rect x="115.32" y="147.43" width="11" height="1" fill="#6283ac" opacity="0.7"/><rect x="203.69" y="6.00" width="11" height="149.40" fill="#5779a6"/><rect x="203.69" y="12.97" width="11" height="1" fill="#6283ac" opacity="0.7"/><rect x="203.69" y="20.44" width="11" height="1" fill="#6283ac" opacity="0.7"/><rect x="203.69" y="27.91" width="11" height="1" fill="#6283ac" opacity="0.7"/><rect x="203.69" y="35.38" width="11" height="1" fill="#6283ac" opacity="0.7"/><rect x="203.69" y="42.85" width="11" height="1" fill="#6283ac" opacity="0.7"/><rect x="203.69" y="50.32" width="11" height="1" fill="#6283ac" opacity="0.7"/><rect x="203.69" y="57.79" width="11" height="1" fill="#6283ac" opacity="0.7"/><rect x="203.69" y="65.26" width="11" height="1" fill="#6283ac" opacity="0.7"/><rect x="203.69" y="72.73" width="11" height="1" fill="#6283ac" opacity="0.7"/><rect x="203.69" y="80.20" width="11" height="1" fill="#6283ac" opacity="0.7"/><rect x="203.69" y="87.67" width="11" height="1" fill="#6283ac" opacity="0.7"/><rect x="203.69" y="95.14" width="11" height="1" fill="#6283ac" opacity="0.7"/><rect x="203.69" y="102.61" width="11" height="1" fill="#6283ac" opacity="0.7"/><rect x="203.69" y="110.08" width="11" height="1" fill="#6283ac" opacity="0.7"/><rect x="203.69" y="117.55" width="11" height="1" fill="#6283ac" opacity="0.7"/><rect x="203.69" y="125.02" width="11" height="1" fill="#6283ac" opacity="0.7"/><rect x="203.69" y="132.49" width="11" height="1" fill="#6283ac" opacity="0.7"/><rect x="203.69" y="139.96" width="11" height="1" fill="#6283ac" opacity="0.7"/><rect x="203.69" y="147.43" width="11" height="1" fill="#6283ac" opacity="0.7"/><rect x="380.43" y="6.00" width="11" height="149.40" fill="#5779a6"/><rect x="380.43" y="12.97" width="11" height="1" fill="#6283ac" opacity="0.7"/><rect x="380.43" y="20.44" width="11" height="1" fill="#6283ac" opacity="0.7"/><rect x="380.43" y="27.91" width="11" height="1" fill="#6283ac" opacity="0.7"/><rect x="380.43" y="35.38" width="11" height="1" fill="#6283ac" opacity="0.7"/><rect x="380.43" y="42.85" width="11" height="1" fill="#6283ac" opacity="0.7"/><rect x="380.43" y="50.32" width="11" height="1" fill="#6283ac" opacity="0.7"/><rect x="380.43" y="57.79" width="11" height="1" fill="#6283ac" opacity="0.7"/><rect x="380.43" y="65.26" width="11" height="1" fill="#6283ac" opacity="0.7"/><rect x="380.43" y="72.73" width="11" height="1" fill="#6283ac" opacity="0.7"/><rect x="380.43" y="80.20" width="11" height="1" fill="#6283ac" opacity="0.7"/><rect x="380.43" y="87.67" width="11" height="1" fill="#6283ac" opacity="0.7"/><rect x="380.43" y="95.14" width="11" height="1" fill="#6283ac" opacity="0.7"/><rect x="380.43" y="102.61" width="11" height="1" fill="#6283ac" opacity="0.7"/><rect x="380.43" y="110.08" width="11" height="1" fill="#6283ac" opacity="0.7"/><rect x="380.43" y="117.55" width="11" height="1" fill="#6283ac" opacity="0.7"/><rect x="380.43" y="125.02" width="11" height="1" fill="#6283ac" opacity="0.7"/><rect x="380.43" y="132.49" width="11" height="1" fill="#6283ac" opacity="0.7"/><rect x="380.43" y="139.96" width="11" height="1" fill="#6283ac" opacity="0.7"/><rect x="380.43" y="147.43" width="11" height="1" fill="#6283ac" opacity="0.7"/><rect x="733.90" y="6.00" width="11" height="149.40" fill="#5779a6"/><rect x="733.90" y="12.97" width="11" height="1" fill="#6283ac" opacity="0.7"/><rect x="733.90" y="20.44" width="11" height="1" fill="#6283ac" opacity="0.7"/><rect x="733.90" y="27.91" width="11" height="1" fill="#6283ac" opacity="0.7"/><rect x="733.90" y="35.38" width="11" height="1" fill="#6283ac" opacity="0.7"/><rect x="733.90" y="42.85" width="11" height="1" fill="#6283ac" opacity="0.7"/><rect x="733.90" y="50.32" width="11" height="1" fill="#6283ac" opacity="0.7"/><rect x="733.90" y="57.79" width="11" height="1" fill="#6283ac" opacity="0.7"/><rect x="733.90" y="65.26" width="11" height="1" fill="#6283ac" opacity="0.7"/><rect x="733.90" y="72.73" width="11" height="1" fill="#6283ac" opacity="0.7"/><rect x="733.90" y="80.20" width="11" height="1" fill="#6283ac" opacity="0.7"/><rect x="733.90" y="87.67" width="11" height="1" fill="#6283ac" opacity="0.7"/><rect x="733.90" y="95.14" width="11" height="1" fill="#6283ac" opacity="0.7"/><rect x="733.90" y="102.61" width="11" height="1" fill="#6283ac" opacity="0.7"/><rect x="733.90" y="110.08" width="11" height="1" fill="#6283ac" opacity="0.7"/><rect x="733.90" y="117.55" width="11" height="1" fill="#6283ac" opacity="0.7"/><rect x="733.90" y="125.02" width="11" height="1" fill="#6283ac" opacity="0.7"/><rect x="733.90" y="132.49" width="11" height="1" fill="#6283ac" opacity="0.7"/><rect x="733.90" y="139.96" width="11" height="1" fill="#6283ac" opacity="0.7"/><rect x="733.90" y="147.43" width="11" height="1" fill="#6283ac" opacity="0.7"/><rect x="38.80" y="153.60" width="9.1" height="1.80" fill="#0b1b34"/><rect x="49.85" y="7.50" width="9.1" height="147.90" fill="#0b1b34"/><rect x="60.89" y="135.20" width="9.1" height="20.20" fill="#141719"/><rect x="71.94" y="137.80" width="9.1" height="17.60" fill="#0b1b34"/><rect x="82.98" y="110.80" width="9.1" height="44.60" fill="#141719"/><rect x="94.03" y="140.50" width="9.1" height="14.90" fill="#141719"/><rect x="105.08" y="120.20" width="9.1" height="35.20" fill="#141719"/><rect x="116.12" y="16.70" width="9.1" height="138.70" fill="#0b1b34"/><rect x="127.17" y="38.20" width="9.1" height="117.20" fill="#141719"/><rect x="138.21" y="110.80" width="9.1" height="44.60" fill="#141719"/><rect x="149.26" y="152.00" width="9.1" height="3.40" fill="#141719"/><rect x="160.31" y="113.70" width="9.1" height="41.70" fill="#141719"/><rect x="171.35" y="41.70" width="9.1" height="113.70" fill="#141719"/><rect x="182.40" y="84.70" width="9.1" height="70.70" fill="#141719"/><rect x="193.44" y="73.40" width="9.1" height="82.00" fill="#141719"/><rect x="204.49" y="104.50" width="9.1" height="50.90" fill="#0b1b34"/><rect x="215.54" y="90.50" width="9.1" height="64.90" fill="#141719"/><rect x="226.58" y="98.70" width="9.1" height="56.70" fill="#141719"/><rect x="237.63" y="72.50" width="9.1" height="82.90" fill="#141719"/><rect x="248.67" y="47.60" width="9.1" height="107.80" fill="#141719"/><rect x="259.72" y="126.70" width="9.1" height="28.70" fill="#141719"/><rect x="270.77" y="28.60" width="9.1" height="126.80" fill="#141719"/><rect x="281.81" y="71.60" width="9.1" height="83.80" fill="#141719"/><rect x="292.86" y="76.60" width="9.1" height="78.80" fill="#141719"/><rect x="303.90" y="38.90" width="9.1" height="116.50" fill="#141719"/><rect x="314.95" y="52.10" width="9.1" height="103.30" fill="#141719"/><rect x="326.00" y="84.70" width="9.1" height="70.70" fill="#141719"/><rect x="337.04" y="81.80" width="9.1" height="73.60" fill="#141719"/><rect x="348.09" y="99.50" width="9.1" height="55.90" fill="#141719"/><rect x="359.13" y="35.20" width="9.1" height="120.20" fill="#141719"/><rect x="370.18" y="61.50" width="9.1" height="93.90" fill="#141719"/><rect x="381.23" y="114.50" width="9.1" height="40.90" fill="#0b1b34"/><rect x="392.27" y="45.70" width="9.1" height="109.70" fill="#141719"/><rect x="403.32" y="48.60" width="9.1" height="106.80" fill="#141719"/><rect x="414.36" y="45.70" width="9.1" height="109.70" fill="#141719"/><rect x="425.41" y="12.80" width="9.1" height="142.60" fill="#141719"/><rect x="436.46" y="10.10" width="9.1" height="145.30" fill="#141719"/><rect x="447.50" y="55.00" width="9.1" height="100.40" fill="#141719"/><rect x="458.55" y="111.90" width="9.1" height="43.50" fill="#141719"/><rect x="469.59" y="126.70" width="9.1" height="28.70" fill="#141719"/><rect x="480.64" y="74.70" width="9.1" height="80.70" fill="#141719"/><rect x="491.69" y="12.80" width="9.1" height="142.60" fill="#141719"/><rect x="502.73" y="132.20" width="9.1" height="23.20" fill="#141719"/><rect x="513.78" y="70.80" width="9.1" height="84.60" fill="#141719"/><rect x="524.82" y="149.30" width="9.1" height="6.10" fill="#141719"/><rect x="535.87" y="87.40" width="9.1" height="68.00" fill="#141719"/><rect x="546.92" y="90.50" width="9.1" height="64.90" fill="#141719"/><rect x="557.96" y="113.70" width="9.1" height="41.70" fill="#141719"/><rect x="569.01" y="56.50" width="9.1" height="98.90" fill="#141719"/><rect x="580.05" y="104.50" width="9.1" height="50.90" fill="#141719"/><rect x="591.10" y="72.60" width="9.1" height="82.80" fill="#141719"/><rect x="602.15" y="53.10" width="9.1" height="102.30" fill="#141719"/><rect x="613.19" y="88.40" width="9.1" height="67.00" fill="#141719"/><rect x="624.24" y="26.00" width="9.1" height="129.40" fill="#141719"/><rect x="635.28" y="72.60" width="9.1" height="82.80" fill="#141719"/><rect x="646.33" y="130.60" width="9.1" height="24.80" fill="#141719"/><rect x="657.38" y="135.40" width="9.1" height="20.00" fill="#141719"/><rect x="668.42" y="126.70" width="9.1" height="28.70" fill="#141719"/><rect x="679.47" y="126.70" width="9.1" height="28.70" fill="#141719"/><rect x="690.51" y="39.90" width="9.1" height="115.50" fill="#141719"/><rect x="701.56" y="14.60" width="9.1" height="140.80" fill="#141719"/><rect x="712.61" y="8.30" width="9.1" height="147.10" fill="#141719"/><rect x="723.65" y="24.80" width="9.1" height="130.60" fill="#141719"/><rect x="734.70" y="70.80" width="9.1" height="84.60" fill="#0b1b34"/><rect x="745.74" y="110.80" width="9.1" height="44.60" fill="#141719"/><rect x="756.79" y="53.20" width="9.1" height="102.20" fill="#141719"/><rect x="767.84" y="42.70" width="9.1" height="112.70" fill="#141719"/><rect x="778.88" y="75.50" width="9.1" height="79.90" fill="#141719"/><rect x="789.93" y="118.40" width="9.1" height="37.00" fill="#141719"/><rect x="800.97" y="95.00" width="9.1" height="60.40" fill="#141719"/><rect x="812.02" y="151.00" width="9.1" height="4.40" fill="#141719"/><rect x="823.07" y="61.60" width="9.1" height="93.80" fill="#141719"/><rect x="834.11" y="108.10" width="9.1" height="47.30" fill="#141719"/><rect x="845.16" y="24.30" width="9.1" height="131.10" fill="#141719"/><rect x="37.00" y="6.00" width="1.2" height="149.90" fill="#5a6873"/><rect x="37.00" y="154.80" width="819.00" height="1" fill="#46535d"/></svg>
<div class="t" style="left:0;top:0;transform:translate(178.21px,566.62px) rotate(-90deg) scaleX(0.862);font-size:10.5px;line-height:10.5px;color:#d5e0ea;-webkit-text-stroke:0.1px #d5e0ea;">Fundamental</div>
<div class="t" style="left:0;top:0;transform:translate(189.31px,566.86px) rotate(-90deg) scaleX(0.893);font-size:10.2px;line-height:10.2px;color:#d5e0ea;-webkit-text-stroke:0.1px #d5e0ea;">+1 oct</div>
<div class="t" style="left:0;top:0;transform:translate(211.40px,566.86px) rotate(-90deg) scaleX(0.893);font-size:10.2px;line-height:10.2px;color:#d5e0ea;-webkit-text-stroke:0.1px #d5e0ea;">+2 oct</div>
<div class="t" style="left:0;top:0;transform:translate(255.58px,566.86px) rotate(-90deg) scaleX(0.893);font-size:10.2px;line-height:10.2px;color:#d5e0ea;-webkit-text-stroke:0.1px #d5e0ea;">+3 oct</div>
<div class="t" style="left:0;top:0;transform:translate(343.95px,566.86px) rotate(-90deg) scaleX(0.893);font-size:10.2px;line-height:10.2px;color:#d5e0ea;-webkit-text-stroke:0.1px #d5e0ea;">+4 oct</div>
<div class="t" style="left:0;top:0;transform:translate(520.69px,566.86px) rotate(-90deg) scaleX(0.893);font-size:10.2px;line-height:10.2px;color:#d5e0ea;-webkit-text-stroke:0.1px #d5e0ea;">+5 oct</div>
<div class="t" style="left:0;top:0;transform:translate(874.16px,566.86px) rotate(-90deg) scaleX(0.893);font-size:10.2px;line-height:10.2px;color:#d5e0ea;-webkit-text-stroke:0.1px #d5e0ea;">+6 oct</div>
<div class="t" style="left:148.07px;top:423.84px;font-size:9.3px;line-height:9.3px;color:#3b4853;transform:scaleX(0.852);">100.0%</div>
<div class="t" style="left:152.42px;top:447.44px;font-size:9.3px;line-height:9.3px;color:#3b4853;transform:scaleX(0.852);">80.0%</div>
<div class="t" style="left:152.42px;top:477.34px;font-size:9.3px;line-height:9.3px;color:#3b4853;transform:scaleX(0.852);">60.0%</div>
<div class="t" style="left:152.42px;top:507.04px;font-size:9.3px;line-height:9.3px;color:#3b4853;transform:scaleX(0.852);">40.0%</div>
<div class="t" style="left:152.42px;top:536.94px;font-size:9.3px;line-height:9.3px;color:#3b4853;transform:scaleX(0.852);">20.0%</div>
<div class="t" style="left:152.42px;top:561.94px;font-size:9.3px;line-height:9.3px;color:#3b4853;transform:scaleX(0.852);">0.00%</div>
</body></html>
